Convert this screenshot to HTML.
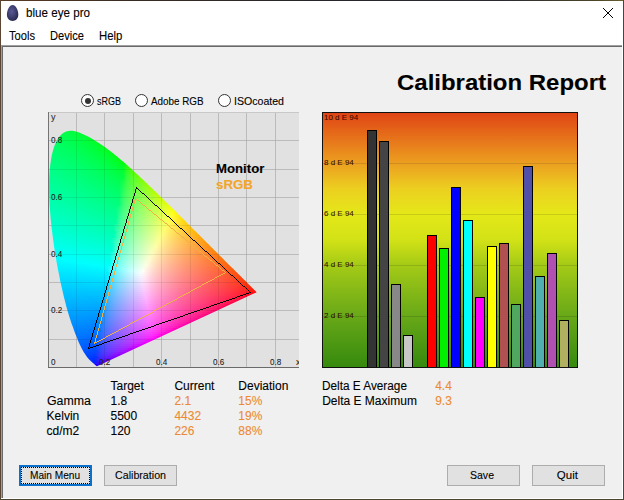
<!DOCTYPE html>
<html><head><meta charset="utf-8"><style>
html,body{margin:0;padding:0}
body{width:624px;height:500px;overflow:hidden;position:relative;background:#f0f0f0;font-family:"Liberation Sans", sans-serif}
div{position:absolute;box-sizing:border-box}
.t{white-space:nowrap;transform-origin:0 0;-webkit-text-stroke:0.1px currentColor}
.ciefill{left:48px;top:112px;width:251px;height:256px}
.ciefill div{height:2px}
.gl{background:rgba(0,0,0,0.2)}
.bar{width:10px;border:1px solid #000}
.btn{top:465px;height:21px;width:73px;background:#e1e1e1;border:1px solid #adadad}
.radio{top:94px;width:13px;height:13px;border-radius:50%;border:1px solid #333;background:#fff}
.lb{font-size:9px;line-height:9px;color:#222;transform:scaleX(0.9)}
.dl{font-size:8px;color:rgba(40,0,0,0.9);white-space:nowrap;left:1px}
</style></head><body>
<!-- window frame -->
<div style="left:0;top:0;width:624px;height:46px;background:#fff"></div>
<div style="left:0;top:0;width:624px;height:1px;background:linear-gradient(90deg,#5a3c24 0%,#3a2c22 20%,#26262a 50%,#2a2a30 80%,#4a4428 95%,#6a6030 100%)"></div>
<div style="left:0;top:0;width:1px;height:500px;background:#5b4634"></div>
<div style="left:623px;top:0;width:1px;height:500px;background:#4a4630"></div>
<div style="left:0;top:499px;width:624px;height:1px;background:#4a4630"></div>
<!-- client sunken border -->
<div style="left:1px;top:45px;width:622px;height:1px;background:#a0a0a0"></div>
<div style="left:1px;top:46px;width:621px;height:1px;background:#696969"></div>
<div style="left:1px;top:45px;width:1px;height:454px;background:#a0a0a0"></div>
<div style="left:2px;top:46px;width:1px;height:452px;background:#696969"></div>
<div style="left:622px;top:45px;width:1px;height:454px;background:#fff"></div>
<div style="left:1px;top:498px;width:622px;height:1px;background:#fff"></div>
<!-- egg icon -->
<svg style="position:absolute;left:0;top:0" width="30" height="30" viewBox="0 0 30 30">
<defs><radialGradient id="eg" cx="0.42" cy="0.4" r="0.65"><stop offset="0" stop-color="#5a5a94"/><stop offset="0.6" stop-color="#3c3c6e"/><stop offset="1" stop-color="#262648"/></radialGradient></defs>
<path d="M12.6 5.1C9.6 5.1 6.9 10.2 6.9 14.6C6.9 18.6 9.4 21 12.6 21C15.8 21 18.3 18.6 18.3 14.6C18.3 10.2 15.6 5.1 12.6 5.1Z" fill="url(#eg)"/>
</svg>
<!-- close X -->
<svg style="position:absolute;left:602px;top:7px" width="12" height="12" viewBox="0 0 12 12"><path d="M1 1L11 11M11 1L1 11" stroke="#000" stroke-width="1"/></svg>
<!-- radios -->
<div class="radio" style="left:81px"></div><div style="left:84.5px;top:97.5px;width:6px;height:6px;border-radius:50%;background:#333"></div>
<div class="radio" style="left:135px"></div>
<div class="radio" style="left:218px"></div>
<!-- CIE plot -->
<div style="left:48px;top:112px;width:251px;height:256px;background:#e1e1e1;border-top:1px solid #c8c8c8"></div>
<div style="left:48px;top:112px;width:251px;height:256px"><div style="background:#cbcbcb;left:28px;top:1px;width:1px;height:255px"></div><div style="background:#cbcbcb;left:56px;top:1px;width:1px;height:255px"></div><div style="background:#cbcbcb;left:85px;top:1px;width:1px;height:255px"></div><div style="background:#cbcbcb;left:113px;top:1px;width:1px;height:255px"></div><div style="background:#cbcbcb;left:142px;top:1px;width:1px;height:255px"></div><div style="background:#cbcbcb;left:170px;top:1px;width:1px;height:255px"></div><div style="background:#cbcbcb;left:198px;top:1px;width:1px;height:255px"></div><div style="background:#cbcbcb;left:227px;top:1px;width:1px;height:255px"></div><div style="background:#cbcbcb;left:1px;top:227px;width:250px;height:1px"></div><div style="background:#cbcbcb;left:1px;top:198px;width:250px;height:1px"></div><div style="background:#cbcbcb;left:1px;top:170px;width:250px;height:1px"></div><div style="background:#cbcbcb;left:1px;top:142px;width:250px;height:1px"></div><div style="background:#cbcbcb;left:1px;top:113px;width:250px;height:1px"></div><div style="background:#cbcbcb;left:1px;top:85px;width:250px;height:1px"></div><div style="background:#cbcbcb;left:1px;top:57px;width:250px;height:1px"></div><div style="background:#cbcbcb;left:1px;top:28px;width:250px;height:1px"></div></div>
<div class="ciefill" style="clip-path:polygon(49.0px 254.2px,49.0px 254.2px,49.0px 254.2px,48.9px 254.2px,48.9px 254.2px,48.9px 254.2px,48.9px 254.2px,48.8px 254.2px,48.8px 254.2px,48.7px 254.2px,48.7px 254.2px,48.6px 254.1px,48.6px 254.1px,48.5px 254.1px,48.5px 254.0px,48.4px 254.0px,48.3px 253.9px,48.3px 253.9px,48.2px 253.8px,48.1px 253.8px,48.0px 253.7px,47.9px 253.6px,47.8px 253.5px,47.7px 253.4px,47.6px 253.3px,47.5px 253.2px,47.4px 253.1px,47.2px 253.0px,47.1px 252.9px,47.0px 252.8px,46.8px 252.6px,46.7px 252.5px,46.5px 252.4px,46.3px 252.2px,46.2px 252.0px,46.0px 251.9px,45.8px 251.7px,45.6px 251.5px,45.3px 251.3px,45.1px 251.1px,44.8px 250.9px,44.5px 250.6px,44.3px 250.4px,44.0px 250.1px,43.7px 249.9px,43.4px 249.6px,43.0px 249.3px,42.7px 249.0px,42.3px 248.6px,41.9px 248.2px,41.5px 247.8px,41.1px 247.4px,40.7px 247.0px,40.3px 246.5px,39.8px 246.0px,39.4px 245.4px,38.9px 244.8px,38.3px 244.0px,37.8px 243.2px,37.2px 242.3px,36.5px 241.3px,35.8px 240.2px,35.1px 239.0px,34.4px 237.7px,33.6px 236.2px,32.8px 234.6px,32.0px 232.9px,31.1px 231.0px,30.2px 228.9px,29.3px 226.6px,28.3px 224.1px,27.2px 221.4px,26.1px 218.4px,25.0px 215.3px,23.7px 211.9px,22.5px 208.2px,21.2px 204.3px,19.9px 200.0px,18.6px 195.5px,17.4px 190.7px,16.1px 185.7px,14.8px 180.3px,13.5px 174.6px,12.2px 168.7px,11.0px 162.5px,9.7px 156.1px,8.5px 149.5px,7.4px 142.8px,6.3px 135.9px,5.3px 129.0px,4.4px 122.0px,3.5px 115.0px,2.8px 108.1px,2.2px 101.3px,1.7px 94.6px,1.4px 88.0px,1.1px 81.6px,1.1px 75.4px,1.1px 69.3px,1.3px 63.5px,1.7px 57.9px,2.3px 52.6px,3.0px 47.7px,3.8px 43.0px,4.9px 38.7px,6.1px 34.8px,7.5px 31.3px,9.0px 28.2px,10.6px 25.6px,12.4px 23.4px,14.2px 21.7px,16.1px 20.4px,18.2px 19.5px,20.2px 18.9px,22.4px 18.7px,24.5px 18.8px,26.7px 19.2px,28.9px 19.7px,31.2px 20.5px,33.4px 21.4px,35.7px 22.4px,37.9px 23.4px,40.1px 24.6px,42.3px 25.8px,44.5px 27.1px,46.7px 28.4px,48.8px 29.7px,50.9px 31.0px,53.0px 32.4px,55.0px 33.8px,57.1px 35.2px,59.1px 36.7px,61.1px 38.2px,63.1px 39.8px,65.1px 41.3px,67.1px 42.9px,69.1px 44.5px,71.1px 46.2px,73.1px 47.9px,75.1px 49.6px,77.1px 51.3px,79.1px 53.0px,81.0px 54.8px,83.0px 56.6px,85.0px 58.4px,86.9px 60.2px,88.9px 62.0px,90.9px 63.8px,92.8px 65.7px,94.8px 67.5px,96.8px 69.4px,98.8px 71.3px,100.7px 73.2px,102.7px 75.1px,104.7px 77.0px,106.6px 78.9px,108.6px 80.8px,110.6px 82.7px,112.5px 84.7px,114.5px 86.6px,116.4px 88.5px,118.4px 90.4px,120.4px 92.4px,122.3px 94.3px,124.3px 96.2px,126.2px 98.1px,128.1px 100.0px,130.0px 102.0px,132.0px 103.9px,133.9px 105.8px,135.8px 107.6px,137.6px 109.5px,139.5px 111.4px,141.4px 113.2px,143.2px 115.1px,145.0px 116.9px,146.9px 118.7px,148.7px 120.5px,150.5px 122.3px,152.2px 124.1px,154.0px 125.8px,155.7px 127.5px,157.4px 129.2px,159.1px 130.9px,160.8px 132.6px,162.4px 134.2px,164.0px 135.8px,165.6px 137.4px,167.2px 138.9px,168.7px 140.4px,170.2px 141.9px,171.6px 143.4px,173.0px 144.8px,174.3px 146.1px,175.7px 147.4px,176.9px 148.7px,178.2px 149.9px,179.4px 151.2px,180.6px 152.4px,181.8px 153.5px,182.9px 154.7px,184.0px 155.7px,185.1px 156.8px,186.1px 157.8px,187.1px 158.8px,188.0px 159.7px,188.9px 160.6px,189.8px 161.4px,190.6px 162.3px,191.4px 163.0px,192.2px 163.8px,192.9px 164.5px,193.6px 165.2px,194.3px 165.9px,194.9px 166.6px,195.5px 167.2px,196.1px 167.8px,196.7px 168.3px,197.2px 168.8px,197.7px 169.3px,198.2px 169.8px,198.7px 170.3px,199.1px 170.7px,199.5px 171.2px,200.0px 171.6px,200.4px 172.0px,200.7px 172.4px,201.1px 172.7px,201.5px 173.1px,201.8px 173.4px,202.1px 173.8px,202.5px 174.1px,202.8px 174.4px,203.1px 174.7px,203.4px 175.0px,203.6px 175.3px,203.9px 175.5px,204.2px 175.8px,204.4px 176.0px,204.6px 176.3px,204.9px 176.5px,205.1px 176.7px,205.3px 176.9px,205.5px 177.1px,205.6px 177.2px,205.8px 177.4px,206.0px 177.6px,206.1px 177.7px,206.3px 177.9px,206.4px 178.0px,206.5px 178.1px,206.7px 178.3px,206.8px 178.4px,206.9px 178.5px,207.0px 178.6px,207.1px 178.7px,207.2px 178.8px,207.3px 178.9px,207.3px 178.9px,207.4px 179.0px,207.5px 179.1px,207.5px 179.1px,207.6px 179.2px,207.6px 179.2px,207.7px 179.3px,207.7px 179.3px,207.8px 179.4px,207.8px 179.4px,207.9px 179.5px,207.9px 179.5px,208.0px 179.6px,208.0px 179.6px,208.0px 179.6px,208.1px 179.7px,208.1px 179.7px,208.2px 179.8px,208.2px 179.8px,208.2px 179.8px,208.3px 179.9px,208.3px 179.9px,208.3px 179.9px,208.4px 180.0px,208.4px 180.0px,208.4px 180.0px,208.5px 180.1px,208.5px 180.1px,208.5px 180.1px,208.5px 180.1px,208.6px 180.2px,208.6px 180.2px,208.6px 180.2px,208.6px 180.2px,208.6px 180.2px,208.6px 180.2px,208.6px 180.2px,208.6px 180.2px,208.6px 180.2px,208.6px 180.2px,208.6px 180.2px,208.7px 180.3px)"><div style="left:16px;top:18px;width:15px;background:linear-gradient(90deg,#00ff49 0px,#00ff44 4px,#00ff3e 8px,#00ff38 12px,#00ff30 16px)"></div><div style="left:12px;top:20px;width:24px;background:linear-gradient(90deg,#00ff51 0px,#00ff4c 4px,#00ff47 8px,#00ff42 12px,#00ff3c 16px,#00ff35 20px,#00ff2c 24px)"></div><div style="left:10px;top:22px;width:30px;background:linear-gradient(90deg,#00ff56 0px,#00ff52 4px,#00ff4d 8px,#00ff48 12px,#00ff42 16px,#00ff3c 20px,#00ff35 24px,#00ff2d 28px,#00ff23 32px)"></div><div style="left:8px;top:24px;width:37px;background:linear-gradient(90deg,#00ff5b 0px,#00ff57 4px,#00ff52 8px,#00ff4d 12px,#00ff48 16px,#00ff43 20px,#00ff3c 24px,#00ff35 28px,#00ff2d 32px,#00ff23 36px,#00ff14 40px)"></div><div style="left:7px;top:26px;width:40px;background:linear-gradient(90deg,#00ff5e 0px,#00ff5a 4px,#00ff56 8px,#00ff52 12px,#00ff4d 16px,#00ff47 20px,#00ff42 24px,#00ff3b 28px,#00ff34 32px,#00ff2b 36px,#00ff20 40px)"></div><div style="left:6px;top:28px;width:45px;background:linear-gradient(90deg,#00ff62 0px,#00ff5e 4px,#00ff5a 8px,#00ff56 12px,#00ff51 16px,#00ff4c 20px,#00ff47 24px,#00ff41 28px,#00ff3a 32px,#00ff32 36px,#00ff29 40px,#00ff1d 44px,#00ff00 48px)"></div><div style="left:5px;top:30px;width:48px;background:linear-gradient(90deg,#00ff65 0px,#00ff61 4px,#00ff5e 8px,#00ff59 12px,#00ff55 16px,#00ff50 20px,#00ff4b 24px,#00ff46 28px,#00ff3f 32px,#00ff39 36px,#00ff31 40px,#00ff27 44px,#00ff19 48px)"></div><div style="left:4px;top:32px;width:54px;background:linear-gradient(90deg,#00ff68 0px,#00ff65 4px,#00ff61 8px,#00ff5d 12px,#00ff59 16px,#00ff54 20px,#00ff50 24px,#00ff4a 28px,#00ff45 32px,#00ff3e 36px,#00ff37 40px,#00ff2f 44px,#00ff24 48px,#00ff15 52px,#00ff00 56px)"></div><div style="left:4px;top:34px;width:56px;background:linear-gradient(90deg,#00ff6b 0px,#00ff67 4px,#00ff64 8px,#00ff60 12px,#00ff5c 16px,#00ff57 20px,#00ff53 24px,#00ff4e 28px,#00ff48 32px,#00ff42 36px,#00ff3b 40px,#00ff34 44px,#00ff2a 48px,#00ff1e 52px,#00ff03 56px)"></div><div style="left:3px;top:36px;width:60px;background:linear-gradient(90deg,#00ff6e 0px,#00ff6b 4px,#00ff67 8px,#00ff63 12px,#00ff5f 16px,#00ff5b 20px,#00ff57 24px,#00ff52 28px,#00ff4d 32px,#00ff47 36px,#00ff41 40px,#00ff3a 44px,#00ff32 48px,#00ff28 52px,#00ff1a 56px,#00ff00 60px)"></div><div style="left:2px;top:38px;width:64px;background:linear-gradient(90deg,#00ff71 0px,#00ff6e 4px,#00ff6b 8px,#00ff67 12px,#00ff63 16px,#00ff5f 20px,#00ff5b 24px,#00ff56 28px,#00ff51 32px,#00ff4c 36px,#00ff46 40px,#00ff40 44px,#00ff38 48px,#00ff30 52px,#00ff25 56px,#00ff16 60px,#00ff00 64px)"></div><div style="left:1px;top:40px;width:67px;background:linear-gradient(90deg,#00ff74 0px,#00ff71 4px,#00ff6e 8px,#00ff6a 12px,#00ff67 16px,#00ff63 20px,#00ff5f 24px,#00ff5a 28px,#00ff56 32px,#00ff51 36px,#00ff4b 40px,#00ff45 44px,#00ff3f 48px,#00ff37 52px,#00ff2e 56px,#00ff23 60px,#00ff10 64px,#00ff00 68px)"></div><div style="left:1px;top:42px;width:70px;background:linear-gradient(90deg,#00ff77 0px,#00ff74 4px,#00ff70 8px,#00ff6d 12px,#00ff69 16px,#00ff65 20px,#00ff61 24px,#00ff5d 28px,#00ff59 32px,#00ff54 36px,#00ff4f 40px,#00ff49 44px,#00ff42 48px,#00ff3b 52px,#00ff33 56px,#00ff29 60px,#00ff1b 64px,#00ff00 68px,#00ff00 72px)"></div><div style="left:1px;top:44px;width:72px;background:linear-gradient(90deg,#00ff79 0px,#00ff76 4px,#00ff73 8px,#00ff6f 12px,#00ff6c 16px,#00ff68 20px,#00ff64 24px,#00ff60 28px,#00ff5c 32px,#00ff57 36px,#00ff52 40px,#00ff4c 44px,#00ff46 48px,#00ff40 52px,#00ff38 56px,#00ff2f 60px,#00ff23 64px,#00ff11 68px,#00ff00 72px)"></div><div style="left:0px;top:46px;width:76px;background:linear-gradient(90deg,#00ff7c 0px,#00ff79 4px,#00ff76 8px,#00ff73 12px,#00ff6f 16px,#00ff6c 20px,#00ff68 24px,#00ff64 28px,#00ff60 32px,#00ff5b 36px,#00ff56 40px,#00ff51 44px,#00ff4b 48px,#00ff45 52px,#00ff3e 56px,#00ff36 60px,#00ff2d 64px,#00ff20 68px,#00ff08 72px,#00ff00 76px)"></div><div style="left:0px;top:48px;width:78px;background:linear-gradient(90deg,#00ff7e 0px,#00ff7b 4px,#00ff78 8px,#00ff75 12px,#00ff72 16px,#00ff6e 20px,#00ff6b 24px,#00ff67 28px,#00ff63 32px,#00ff5e 36px,#00ff59 40px,#00ff54 44px,#00ff4f 48px,#00ff49 52px,#00ff42 56px,#00ff3b 60px,#00ff32 64px,#00ff27 68px,#00ff18 72px,#00ff00 76px,#29ff00 80px)"></div><div style="left:0px;top:50px;width:80px;background:linear-gradient(90deg,#00ff81 0px,#00ff7e 4px,#00ff7b 8px,#00ff78 12px,#00ff74 16px,#00ff71 20px,#00ff6d 24px,#00ff69 28px,#00ff65 32px,#00ff61 36px,#00ff5d 40px,#00ff58 44px,#00ff52 48px,#00ff4d 52px,#00ff46 56px,#00ff3f 60px,#00ff37 64px,#00ff2e 68px,#00ff21 72px,#00ff09 76px,#2bff00 80px)"></div><div style="left:0px;top:52px;width:82px;background:linear-gradient(90deg,#00ff83 0px,#00ff80 4px,#00ff7d 8px,#00ff7a 12px,#00ff77 16px,#00ff73 20px,#00ff70 24px,#00ff6c 28px,#00ff68 32px,#00ff64 36px,#00ff60 40px,#00ff5b 44px,#00ff56 48px,#00ff50 52px,#00ff4a 56px,#00ff44 60px,#00ff3c 64px,#00ff33 68px,#00ff28 72px,#00ff19 76px,#2eff00 80px,#48ff00 84px)"></div><div style="left:-1px;top:54px;width:86px;background:linear-gradient(90deg,#00ff86 0px,#00ff83 4px,#00ff80 8px,#00ff7d 12px,#00ff7a 16px,#00ff77 20px,#00ff73 24px,#00ff70 28px,#00ff6c 32px,#00ff68 36px,#00ff64 40px,#00ff5f 44px,#00ff5a 48px,#00ff55 52px,#00ff4f 56px,#00ff49 60px,#00ff42 64px,#00ff3a 68px,#00ff31 72px,#00ff25 76px,#28ff13 80px,#44ff00 84px,#58ff00 88px)"></div><div style="left:-1px;top:56px;width:87px;background:linear-gradient(90deg,#00ff88 0px,#00ff86 4px,#00ff83 8px,#00ff80 12px,#00ff7d 16px,#00ff79 20px,#00ff76 24px,#00ff72 28px,#00ff6f 32px,#00ff6b 36px,#00ff67 40px,#00ff62 44px,#00ff5e 48px,#00ff58 52px,#00ff53 56px,#00ff4d 60px,#00ff46 64px,#00ff3f 68px,#00ff37 72px,#00ff2c 76px,#2bff1e 80px,#46ff00 84px,#5aff00 88px)"></div><div style="left:-1px;top:58px;width:89px;background:linear-gradient(90deg,#00ff8b 0px,#00ff88 4px,#00ff85 8px,#00ff82 12px,#00ff7f 16px,#00ff7c 20px,#00ff79 24px,#00ff75 28px,#00ff71 32px,#00ff6e 36px,#00ff6a 40px,#00ff65 44px,#00ff61 48px,#00ff5c 52px,#00ff57 56px,#00ff51 60px,#00ff4b 64px,#00ff44 68px,#00ff3c 72px,#00ff32 76px,#2eff26 80px,#48ff14 84px,#5cff00 88px,#6cff00 92px)"></div><div style="left:-1px;top:60px;width:92px;background:linear-gradient(90deg,#00ff8d 0px,#00ff8a 4px,#00ff87 8px,#00ff85 12px,#00ff82 16px,#00ff7e 20px,#00ff7b 24px,#00ff78 28px,#00ff74 32px,#00ff70 36px,#00ff6c 40px,#00ff68 44px,#00ff64 48px,#00ff5f 52px,#00ff5a 56px,#00ff54 60px,#00ff4e 64px,#00ff48 68px,#00ff40 72px,#00ff38 76px,#31ff2d 80px,#4aff1f 84px,#5dff00 88px,#6eff00 92px)"></div><div style="left:-1px;top:62px;width:94px;background:linear-gradient(90deg,#00ff8f 0px,#00ff8d 4px,#00ff8a 8px,#00ff87 12px,#00ff84 16px,#00ff81 20px,#00ff7e 24px,#00ff7a 28px,#00ff77 32px,#00ff73 36px,#00ff6f 40px,#00ff6b 44px,#00ff67 48px,#00ff62 52px,#00ff5d 56px,#00ff58 60px,#00ff52 64px,#00ff4c 68px,#00ff45 72px,#00ff3d 76px,#33ff33 80px,#4cff27 84px,#5fff15 88px,#6fff00 92px,#7eff00 96px)"></div><div style="left:-1px;top:64px;width:96px;background:linear-gradient(90deg,#00ff92 0px,#00ff8f 4px,#00ff8c 8px,#00ff89 12px,#00ff87 16px,#00ff84 20px,#00ff80 24px,#00ff7d 28px,#00ff7a 32px,#00ff76 36px,#00ff72 40px,#00ff6e 44px,#00ff6a 48px,#00ff65 52px,#00ff61 56px,#00ff5b 60px,#00ff56 64px,#00ff50 68px,#00ff49 72px,#00ff41 76px,#36ff39 80px,#4eff2e 84px,#61ff20 88px,#71ff00 92px,#7fff00 96px)"></div><div style="left:-1px;top:66px;width:98px;background:linear-gradient(90deg,#00ff94 0px,#00ff91 4px,#00ff8f 8px,#00ff8c 12px,#00ff89 16px,#00ff86 20px,#00ff83 24px,#00ff80 28px,#00ff7c 32px,#00ff79 36px,#00ff75 40px,#00ff71 44px,#00ff6d 48px,#00ff69 52px,#00ff64 56px,#00ff5f 60px,#00ff5a 64px,#00ff54 68px,#00ff4d 72px,#06ff46 76px,#38ff3e 80px,#50ff34 84px,#63ff28 88px,#73ff16 92px,#81ff00 96px,#8eff00 100px)"></div><div style="left:-1px;top:68px;width:100px;background:linear-gradient(90deg,#00ff96 0px,#00ff94 4px,#00ff91 8px,#00ff8e 12px,#00ff8c 16px,#00ff89 20px,#00ff86 24px,#00ff82 28px,#00ff7f 32px,#00ff7c 36px,#00ff78 40px,#00ff74 44px,#00ff70 48px,#00ff6c 52px,#00ff67 56px,#00ff62 60px,#00ff5d 64px,#00ff57 68px,#00ff51 72px,#10ff4a 76px,#3bff43 80px,#52ff3a 84px,#65ff2f 88px,#75ff21 92px,#83ff00 96px,#90ff00 100px)"></div><div style="left:-1px;top:70px;width:102px;background:linear-gradient(90deg,#00ff99 0px,#00ff96 4px,#00ff93 8px,#00ff91 12px,#00ff8e 16px,#00ff8b 20px,#00ff88 24px,#00ff85 28px,#00ff82 32px,#00ff7e 36px,#00ff7b 40px,#00ff77 44px,#00ff73 48px,#00ff6f 52px,#00ff6a 56px,#00ff66 60px,#00ff61 64px,#00ff5b 68px,#00ff55 72px,#17ff4f 76px,#3dff47 80px,#54ff3f 84px,#67ff35 88px,#76ff29 92px,#85ff17 96px,#92ff00 100px,#9eff00 104px)"></div><div style="left:-1px;top:72px;width:104px;background:linear-gradient(90deg,#00ff9b 0px,#00ff98 4px,#00ff96 8px,#00ff93 12px,#00ff91 16px,#00ff8e 20px,#00ff8b 24px,#00ff88 28px,#00ff84 32px,#00ff81 36px,#00ff7e 40px,#00ff7a 44px,#00ff76 48px,#00ff72 52px,#00ff6e 56px,#00ff69 60px,#00ff64 64px,#00ff5f 68px,#00ff59 72px,#1cff53 76px,#40ff4c 80px,#56ff44 84px,#68ff3b 88px,#78ff30 92px,#86ff22 96px,#94ff00 100px,#a0ff00 104px)"></div><div style="left:-1px;top:74px;width:106px;background:linear-gradient(90deg,#00ff9d 0px,#00ff9b 4px,#00ff98 8px,#00ff96 12px,#00ff93 16px,#00ff90 20px,#00ff8d 24px,#00ff8a 28px,#00ff87 32px,#00ff84 36px,#00ff80 40px,#00ff7d 44px,#00ff79 48px,#00ff75 52px,#00ff71 56px,#00ff6c 60px,#00ff67 64px,#00ff62 68px,#00ff5d 72px,#20ff57 76px,#42ff50 80px,#58ff49 84px,#6aff40 88px,#7aff37 92px,#88ff2a 96px,#96ff18 100px,#a2ff00 104px,#aeff00 108px)"></div><div style="left:-1px;top:76px;width:109px;background:linear-gradient(90deg,#00ffa0 0px,#00ff9d 4px,#00ff9b 8px,#00ff98 12px,#00ff96 16px,#00ff93 20px,#00ff90 24px,#00ff8d 28px,#00ff8a 32px,#00ff87 36px,#00ff83 40px,#00ff80 44px,#00ff7c 48px,#00ff78 52px,#00ff74 56px,#00ff70 60px,#00ff6b 64px,#00ff66 68px,#00ff61 72px,#24ff5b 76px,#44ff54 80px,#5aff4d 84px,#6cff46 88px,#7cff3c 92px,#8aff31 96px,#97ff23 100px,#a4ff00 104px,#b0ff00 108px,#bbff00 112px)"></div><div style="left:-1px;top:78px;width:111px;background:linear-gradient(90deg,#00ffa2 0px,#00ffa0 4px,#00ff9d 8px,#00ff9b 12px,#00ff98 16px,#00ff95 20px,#00ff93 24px,#00ff90 28px,#00ff8d 32px,#00ff89 36px,#00ff86 40px,#00ff83 44px,#00ff7f 48px,#00ff7b 52px,#00ff77 56px,#00ff73 60px,#00ff6e 64px,#00ff69 68px,#00ff64 72px,#27ff5f 76px,#47ff59 80px,#5cff52 84px,#6eff4a 88px,#7eff42 92px,#8cff38 96px,#99ff2b 100px,#a6ff19 104px,#b2ff00 108px,#bdff00 112px)"></div><div style="left:-1px;top:80px;width:113px;background:linear-gradient(90deg,#00ffa4 0px,#00ffa2 4px,#00ffa0 8px,#00ff9d 12px,#00ff9b 16px,#00ff98 20px,#00ff95 24px,#00ff92 28px,#00ff8f 32px,#00ff8c 36px,#00ff89 40px,#00ff86 44px,#00ff82 48px,#00ff7e 52px,#00ff7a 56px,#00ff76 60px,#00ff72 64px,#00ff6d 68px,#00ff68 72px,#2bff62 76px,#49ff5d 80px,#5eff56 84px,#70ff4f 88px,#80ff47 92px,#8eff3e 96px,#9bff33 100px,#a8ff24 104px,#b4ff00 108px,#bfff00 112px,#caff00 116px)"></div><div style="left:-1px;top:82px;width:115px;background:linear-gradient(90deg,#00ffa7 0px,#00ffa5 4px,#00ffa2 8px,#00ffa0 12px,#00ff9d 16px,#00ff9b 20px,#00ff98 24px,#00ff95 28px,#00ff92 32px,#00ff8f 36px,#00ff8c 40px,#00ff88 44px,#00ff85 48px,#00ff81 52px,#00ff7d 56px,#00ff79 60px,#00ff75 64px,#00ff70 68px,#00ff6b 72px,#2eff66 76px,#4bff61 80px,#60ff5a 84px,#72ff54 88px,#82ff4c 92px,#90ff43 96px,#9dff39 100px,#aaff2c 104px,#b6ff1a 108px,#c1ff00 112px,#ccff00 116px)"></div><div style="left:-1px;top:84px;width:117px;background:linear-gradient(90deg,#00ffa9 0px,#00ffa7 4px,#00ffa5 8px,#00ffa2 12px,#00ffa0 16px,#00ff9d 20px,#00ff9b 24px,#00ff98 28px,#00ff95 32px,#00ff92 36px,#00ff8f 40px,#00ff8b 44px,#00ff88 48px,#00ff84 52px,#00ff80 56px,#00ff7c 60px,#00ff78 64px,#00ff74 68px,#00ff6f 72px,#31ff6a 76px,#4dff64 80px,#62ff5e 84px,#74ff58 88px,#84ff51 92px,#92ff49 96px,#9fff3f 100px,#acff34 104px,#b8ff25 108px,#c3ff03 112px,#cfff00 116px,#daff00 120px)"></div><div style="left:-1px;top:86px;width:119px;background:linear-gradient(90deg,#00ffac 0px,#00ffaa 4px,#00ffa7 8px,#00ffa5 12px,#00ffa2 16px,#00ffa0 20px,#00ff9d 24px,#00ff9a 28px,#00ff98 32px,#00ff95 36px,#00ff92 40px,#00ff8e 44px,#00ff8b 48px,#00ff87 52px,#00ff84 56px,#00ff80 60px,#00ff7c 64px,#00ff77 68px,#00ff73 72px,#34ff6e 76px,#50ff68 80px,#64ff63 84px,#76ff5c 88px,#86ff55 92px,#94ff4e 96px,#a1ff45 100px,#aeff3b 104px,#baff2e 108px,#c6ff1b 112px,#d1ff00 116px,#dcff00 120px)"></div><div style="left:-1px;top:88px;width:121px;background:linear-gradient(90deg,#00ffae 0px,#00ffac 4px,#00ffaa 8px,#00ffa7 12px,#00ffa5 16px,#00ffa2 20px,#00ffa0 24px,#00ff9d 28px,#00ff9a 32px,#00ff97 36px,#00ff94 40px,#00ff91 44px,#00ff8e 48px,#00ff8a 52px,#00ff87 56px,#00ff83 60px,#00ff7f 64px,#00ff7b 68px,#00ff76 72px,#37ff71 76px,#52ff6c 80px,#66ff67 84px,#78ff60 88px,#88ff5a 92px,#96ff53 96px,#a3ff4a 100px,#b0ff41 104px,#bcff35 108px,#c8ff26 112px,#d3ff06 116px,#deff00 120px,#e9ff00 124px)"></div><div style="left:-1px;top:90px;width:123px;background:linear-gradient(90deg,#00ffb1 0px,#00ffaf 4px,#00ffac 8px,#00ffaa 12px,#00ffa8 16px,#00ffa5 20px,#00ffa3 24px,#00ffa0 28px,#00ff9d 32px,#00ff9a 36px,#00ff97 40px,#00ff94 44px,#00ff91 48px,#00ff8d 52px,#00ff8a 56px,#00ff86 60px,#00ff82 64px,#00ff7e 68px,#00ff7a 72px,#3aff75 76px,#54ff70 80px,#69ff6a 84px,#7aff65 88px,#8aff5e 92px,#98ff57 96px,#a5ff4f 100px,#b2ff47 104px,#beff3c 108px,#caff2f 112px,#d6ff1c 116px,#e1ff00 120px,#ecff00 124px)"></div><div style="left:-1px;top:92px;width:125px;background:linear-gradient(90deg,#00ffb3 0px,#00ffb1 4px,#00ffaf 8px,#00ffad 12px,#00ffaa 16px,#00ffa8 20px,#00ffa5 24px,#00ffa3 28px,#00ffa0 32px,#00ff9d 36px,#00ff9a 40px,#00ff97 44px,#00ff94 48px,#00ff91 52px,#00ff8d 56px,#00ff89 60px,#00ff85 64px,#00ff81 68px,#00ff7d 72px,#3cff78 76px,#56ff74 80px,#6bff6e 84px,#7cff69 88px,#8cff63 92px,#9aff5c 96px,#a7ff54 100px,#b4ff4c 104px,#c1ff42 108px,#ccff37 112px,#d8ff27 116px,#e3ff08 120px,#eeff00 124px,#f9ff00 128px)"></div><div style="left:-1px;top:94px;width:127px;background:linear-gradient(90deg,#00ffb6 0px,#00ffb4 4px,#00ffb1 8px,#00ffaf 12px,#00ffad 16px,#00ffaa 20px,#00ffa8 24px,#00ffa5 28px,#00ffa3 32px,#00ffa0 36px,#00ff9d 40px,#00ff9a 44px,#00ff97 48px,#00ff94 52px,#00ff90 56px,#00ff8d 60px,#00ff89 64px,#00ff85 68px,#10ff81 72px,#3fff7c 76px,#59ff77 80px,#6dff72 84px,#7eff6d 88px,#8eff67 92px,#9cff60 96px,#aaff59 100px,#b7ff51 104px,#c3ff48 108px,#cfff3e 112px,#daff30 116px,#e6ff1d 120px,#f1ff00 124px,#fcff00 128px)"></div><div style="left:-1px;top:96px;width:129px;background:linear-gradient(90deg,#00ffb8 0px,#00ffb6 4px,#00ffb4 8px,#00ffb2 12px,#00ffb0 16px,#00ffad 20px,#00ffab 24px,#00ffa8 28px,#00ffa6 32px,#00ffa3 36px,#00ffa0 40px,#00ff9d 44px,#00ff9a 48px,#00ff97 52px,#00ff93 56px,#00ff90 60px,#00ff8c 64px,#00ff88 68px,#17ff84 72px,#42ff80 76px,#5bff7b 80px,#6fff76 84px,#80ff71 88px,#90ff6b 92px,#9eff65 96px,#acff5e 100px,#b9ff57 104px,#c5ff4e 108px,#d1ff44 112px,#ddff38 116px,#e8ff29 120px,#f3ff0a 124px,#feff00 128px,#fff400 132px)"></div><div style="left:0px;top:98px;width:130px;background:linear-gradient(90deg,#00ffba 0px,#00ffb8 4px,#00ffb6 8px,#00ffb4 12px,#00ffb2 16px,#00ffaf 20px,#00ffad 24px,#00ffaa 28px,#00ffa8 32px,#00ffa5 36px,#00ffa2 40px,#00ff9f 44px,#00ff9c 48px,#00ff99 52px,#00ff96 56px,#00ff92 60px,#00ff8f 64px,#00ff8b 68px,#2aff87 72px,#4bff82 76px,#62ff7e 80px,#76ff79 84px,#86ff73 88px,#96ff6e 92px,#a4ff68 96px,#b1ff61 100px,#beff5a 104px,#cbff51 108px,#d7ff48 112px,#e2ff3c 116px,#eeff2e 120px,#f9ff17 124px,#fff900 128px,#ffef00 132px)"></div><div style="left:0px;top:100px;width:133px;background:linear-gradient(90deg,#00ffbd 0px,#00ffbb 4px,#00ffb9 8px,#00ffb7 12px,#00ffb4 16px,#00ffb2 20px,#00ffb0 24px,#00ffad 28px,#00ffab 32px,#00ffa8 36px,#00ffa5 40px,#00ffa2 44px,#00ff9f 48px,#00ff9c 52px,#00ff99 56px,#00ff95 60px,#00ff92 64px,#00ff8e 68px,#2eff8a 72px,#4eff86 76px,#65ff81 80px,#78ff7d 84px,#88ff77 88px,#98ff72 92px,#a6ff6c 96px,#b4ff66 100px,#c1ff5f 104px,#cdff57 108px,#d9ff4e 112px,#e5ff43 116px,#f0ff36 120px,#fcff25 124px,#fff600 128px,#ffec00 132px,#ffe300 136px)"></div><div style="left:0px;top:102px;width:134px;background:linear-gradient(90deg,#00ffc0 0px,#00ffbe 4px,#00ffbc 8px,#00ffb9 12px,#00ffb7 16px,#00ffb5 20px,#00ffb3 24px,#00ffb0 28px,#00ffae 32px,#00ffab 36px,#00ffa8 40px,#00ffa5 44px,#00ffa2 48px,#00ff9f 52px,#00ff9c 56px,#00ff99 60px,#00ff95 64px,#00ff92 68px,#31ff8e 72px,#50ff89 76px,#67ff85 80px,#7aff80 84px,#8bff7b 88px,#9aff76 92px,#a8ff70 96px,#b6ff6a 100px,#c3ff63 104px,#d0ff5c 108px,#dcff53 112px,#e8ff4a 116px,#f3ff3e 120px,#fffe2f 124px,#fff417 128px,#ffea00 132px,#ffe100 136px)"></div><div style="left:0px;top:104px;width:136px;background:linear-gradient(90deg,#00ffc2 0px,#00ffc0 4px,#00ffbe 8px,#00ffbc 12px,#00ffba 16px,#00ffb8 20px,#00ffb5 24px,#00ffb3 28px,#00ffb1 32px,#00ffae 36px,#00ffab 40px,#00ffa9 44px,#00ffa6 48px,#00ffa3 52px,#00ff9f 56px,#00ff9c 60px,#00ff99 64px,#00ff95 68px,#35ff91 72px,#53ff8d 76px,#69ff89 80px,#7cff84 84px,#8dff7f 88px,#9cff7a 92px,#abff75 96px,#b8ff6f 100px,#c5ff68 104px,#d2ff61 108px,#deff59 112px,#eaff50 116px,#f6ff45 120px,#fffb37 124px,#fff124 128px,#ffe700 132px,#ffde00 136px)"></div><div style="left:0px;top:106px;width:138px;background:linear-gradient(90deg,#00ffc5 0px,#00ffc3 4px,#00ffc1 8px,#00ffbf 12px,#00ffbd 16px,#00ffbb 20px,#00ffb8 24px,#00ffb6 28px,#00ffb4 32px,#00ffb1 36px,#00ffae 40px,#00ffac 44px,#00ffa9 48px,#00ffa6 52px,#00ffa3 56px,#00ff9f 60px,#00ff9c 64px,#00ff98 68px,#38ff95 72px,#55ff91 76px,#6bff8d 80px,#7eff88 84px,#8fff83 88px,#9fff7e 92px,#adff79 96px,#bbff73 100px,#c8ff6d 104px,#d5ff66 108px,#e1ff5e 112px,#edff56 116px,#f9ff4c 120px,#fff83e 124px,#ffee2e 128px,#ffe417 132px,#ffdc00 136px,#ffd300 140px)"></div><div style="left:0px;top:108px;width:140px;background:linear-gradient(90deg,#00ffc8 0px,#00ffc6 4px,#00ffc4 8px,#00ffc2 12px,#00ffc0 16px,#00ffbd 20px,#00ffbb 24px,#00ffb9 28px,#00ffb7 32px,#00ffb4 36px,#00ffb1 40px,#00ffaf 44px,#00ffac 48px,#00ffa9 52px,#00ffa6 56px,#00ffa3 60px,#00ffa0 64px,#00ff9c 68px,#3bff98 72px,#58ff94 76px,#6eff90 80px,#81ff8c 84px,#91ff87 88px,#a1ff83 92px,#afff7d 96px,#bdff78 100px,#cbff72 104px,#d7ff6b 108px,#e4ff64 112px,#f0ff5b 116px,#fcff52 120px,#fff645 124px,#ffeb35 128px,#ffe223 132px,#ffd900 136px,#ffd100 140px)"></div><div style="left:0px;top:110px;width:142px;background:linear-gradient(90deg,#00ffca 0px,#00ffc8 4px,#00ffc7 8px,#00ffc5 12px,#00ffc3 16px,#00ffc0 20px,#00ffbe 24px,#00ffbc 28px,#00ffba 32px,#00ffb7 36px,#00ffb5 40px,#00ffb2 44px,#00ffaf 48px,#00ffac 52px,#00ffa9 56px,#00ffa6 60px,#00ffa3 64px,#00ffa0 68px,#3eff9c 72px,#5aff98 76px,#70ff94 80px,#83ff90 84px,#94ff8b 88px,#a3ff87 92px,#b2ff82 96px,#c0ff7c 100px,#cdff76 104px,#daff70 108px,#e7ff69 112px,#f3ff61 116px,#fffe58 120px,#fff34a 124px,#ffe83c 128px,#ffdf2c 132px,#ffd616 136px,#ffce00 140px,#ffc700 144px)"></div><div style="left:1px;top:112px;width:143px;background:linear-gradient(90deg,#00ffcd 0px,#00ffcb 4px,#00ffc9 8px,#00ffc7 12px,#00ffc5 16px,#00ffc3 20px,#00ffc1 24px,#00ffbe 28px,#00ffbc 32px,#00ffba 36px,#00ffb7 40px,#00ffb5 44px,#00ffb2 48px,#00ffaf 52px,#00ffac 56px,#00ffa9 60px,#00ffa6 64px,#20ffa2 68px,#49ff9f 72px,#63ff9b 76px,#77ff97 80px,#8aff93 84px,#9aff8e 88px,#a9ff8a 92px,#b8ff85 96px,#c6ff7f 100px,#d3ff79 104px,#e0ff73 108px,#edff6c 112px,#f9ff64 116px,#fff859 120px,#ffed4c 124px,#ffe33f 128px,#ffda30 132px,#ffd21d 136px,#ffca00 140px,#ffc300 144px)"></div><div style="left:1px;top:114px;width:145px;background:linear-gradient(90deg,#00ffcf 0px,#00ffce 4px,#00ffcc 8px,#00ffca 12px,#00ffc8 16px,#00ffc6 20px,#00ffc4 24px,#00ffc1 28px,#00ffbf 32px,#00ffbd 36px,#00ffba 40px,#00ffb8 44px,#00ffb5 48px,#00ffb2 52px,#00ffaf 56px,#00ffac 60px,#00ffa9 64px,#25ffa6 68px,#4cffa2 72px,#65ff9f 76px,#7aff9b 80px,#8cff97 84px,#9cff92 88px,#acff8e 92px,#baff89 96px,#c8ff84 100px,#d6ff7e 104px,#e3ff78 108px,#f0ff71 112px,#fcff6a 116px,#fff55e 120px,#ffea51 124px,#ffe044 128px,#ffd737 132px,#ffcf27 136px,#ffc80e 140px,#ffc000 144px,#ffba00 148px)"></div><div style="left:1px;top:116px;width:147px;background:linear-gradient(90deg,#00ffd2 0px,#00ffd0 4px,#00ffcf 8px,#00ffcd 12px,#00ffcb 16px,#00ffc9 20px,#00ffc7 24px,#00ffc5 28px,#00ffc2 32px,#00ffc0 36px,#00ffbe 40px,#00ffbb 44px,#00ffb8 48px,#00ffb6 52px,#00ffb3 56px,#00ffb0 60px,#00ffad 64px,#29ffaa 68px,#4effa6 72px,#67ffa3 76px,#7cff9f 80px,#8eff9b 84px,#9fff96 88px,#aeff92 92px,#bdff8d 96px,#cbff88 100px,#d9ff83 104px,#e6ff7d 108px,#f3ff76 112px,#fffe6f 116px,#fff262 120px,#ffe756 124px,#ffde4a 128px,#ffd53d 132px,#ffcd2e 136px,#ffc51c 140px,#ffbe00 144px,#ffb700 148px)"></div><div style="left:2px;top:118px;width:148px;background:linear-gradient(90deg,#00ffd5 0px,#00ffd3 4px,#00ffd1 8px,#00ffcf 12px,#00ffcd 16px,#00ffcb 20px,#00ffc9 24px,#00ffc7 28px,#00ffc5 32px,#00ffc3 36px,#00ffc0 40px,#00ffbe 44px,#00ffbb 48px,#00ffb8 52px,#00ffb6 56px,#00ffb3 60px,#00ffb0 64px,#38ffac 68px,#58ffa9 72px,#6fffa5 76px,#83ffa2 80px,#95ff9e 84px,#a5ff9a 88px,#b5ff95 92px,#c3ff90 96px,#d1ff8b 100px,#dfff86 104px,#ecff80 108px,#f9ff7a 112px,#fff76f 116px,#ffec63 120px,#ffe257 124px,#ffd94b 128px,#ffd03f 132px,#ffc832 136px,#ffc121 140px,#ffba00 144px,#ffb400 148px)"></div><div style="left:2px;top:120px;width:150px;background:linear-gradient(90deg,#00ffd8 0px,#00ffd6 4px,#00ffd4 8px,#00ffd2 12px,#00ffd0 16px,#00ffce 20px,#00ffcc 24px,#00ffca 28px,#00ffc8 32px,#00ffc6 36px,#00ffc4 40px,#00ffc1 44px,#00ffbf 48px,#00ffbc 52px,#00ffb9 56px,#00ffb6 60px,#00ffb3 64px,#3cffb0 68px,#5bffad 72px,#72ffa9 76px,#86ffa6 80px,#98ffa2 84px,#a8ff9e 88px,#b7ff99 92px,#c6ff95 96px,#d4ff90 100px,#e2ff8b 104px,#efff85 108px,#fcff7f 112px,#fff473 116px,#ffe967 120px,#ffdf5b 124px,#ffd650 128px,#ffcd44 132px,#ffc538 136px,#ffbe29 140px,#ffb716 144px,#ffb100 148px,#ffab00 152px)"></div><div style="left:2px;top:122px;width:152px;background:linear-gradient(90deg,#00ffdb 0px,#00ffd9 4px,#00ffd7 8px,#00ffd5 12px,#00ffd4 16px,#00ffd2 20px,#00ffd0 24px,#00ffce 28px,#00ffcb 32px,#00ffc9 36px,#00ffc7 40px,#00ffc5 44px,#00ffc2 48px,#00ffbf 52px,#00ffbd 56px,#00ffba 60px,#00ffb7 64px,#3fffb4 68px,#5dffb1 72px,#74ffad 76px,#88ffaa 80px,#9affa6 84px,#abffa2 88px,#baff9e 92px,#c9ff99 96px,#d7ff94 100px,#e5ff8f 104px,#f2ff8a 108px,#fffd83 112px,#fff177 116px,#ffe66b 120px,#ffdc5f 124px,#ffd354 128px,#ffcb49 132px,#ffc33d 136px,#ffbc30 140px,#ffb521 144px,#ffaf00 148px,#ffa900 152px)"></div><div style="left:2px;top:124px;width:154px;background:linear-gradient(90deg,#00ffde 0px,#00ffdc 4px,#00ffda 8px,#00ffd8 12px,#00ffd7 16px,#00ffd5 20px,#00ffd3 24px,#00ffd1 28px,#00ffcf 32px,#00ffcd 36px,#00ffca 40px,#00ffc8 44px,#00ffc6 48px,#00ffc3 52px,#00ffc0 56px,#00ffbe 60px,#00ffbb 64px,#42ffb8 68px,#60ffb5 72px,#77ffb1 76px,#8bffae 80px,#9dffaa 84px,#adffa6 88px,#bdffa2 92px,#ccff9e 96px,#daff99 100px,#e8ff94 104px,#f6ff8f 108px,#fffa87 112px,#ffee7a 116px,#ffe36e 120px,#ffd963 124px,#ffd058 128px,#ffc84d 132px,#ffc042 136px,#ffb936 140px,#ffb328 144px,#ffac16 148px,#ffa600 152px,#ffa100 156px)"></div><div style="left:3px;top:126px;width:155px;background:linear-gradient(90deg,#00ffe0 0px,#00ffdf 4px,#00ffdd 8px,#00ffdb 12px,#00ffd9 16px,#00ffd8 20px,#00ffd6 24px,#00ffd4 28px,#00ffd2 32px,#00ffcf 36px,#00ffcd 40px,#00ffcb 44px,#00ffc9 48px,#00ffc6 52px,#00ffc3 56px,#00ffc1 60px,#24ffbe 64px,#4effbb 68px,#69ffb8 72px,#7fffb4 76px,#92ffb1 80px,#a4ffad 84px,#b4ffaa 88px,#c4ffa5 92px,#d2ffa1 96px,#e1ff9c 100px,#efff98 104px,#fcff92 108px,#fff487 112px,#ffe87a 116px,#ffde6f 120px,#ffd464 124px,#ffcb59 128px,#ffc34f 132px,#ffbc44 136px,#ffb538 140px,#ffae2c 144px,#ffa81b 148px,#ffa300 152px,#ff9d00 156px)"></div><div style="left:3px;top:128px;width:157px;background:linear-gradient(90deg,#00ffe3 0px,#00ffe2 4px,#00ffe0 8px,#00ffde 12px,#00ffdd 16px,#00ffdb 20px,#00ffd9 24px,#00ffd7 28px,#00ffd5 32px,#00ffd3 36px,#00ffd1 40px,#00ffcf 44px,#00ffcc 48px,#00ffca 52px,#00ffc7 56px,#00ffc5 60px,#29ffc2 64px,#51ffbf 68px,#6bffbc 72px,#81ffb9 76px,#95ffb5 80px,#a6ffb2 84px,#b7ffae 88px,#c6ffaa 92px,#d5ffa6 96px,#e4ffa1 100px,#f2ff9c 104px,#fffd96 108px,#fff08a 112px,#ffe57e 116px,#ffda72 120px,#ffd168 124px,#ffc85d 128px,#ffc153 132px,#ffb948 136px,#ffb23d 140px,#ffac32 144px,#ffa624 148px,#ffa00f 152px,#ff9b00 156px,#ff9600 160px)"></div><div style="left:3px;top:130px;width:159px;background:linear-gradient(90deg,#00ffe6 0px,#00ffe5 4px,#00ffe3 8px,#00ffe2 12px,#00ffe0 16px,#00ffde 20px,#00ffdc 24px,#00ffda 28px,#00ffd9 32px,#00ffd6 36px,#00ffd4 40px,#00ffd2 44px,#00ffd0 48px,#00ffce 52px,#00ffcb 56px,#00ffc8 60px,#2dffc6 64px,#54ffc3 68px,#6effc0 72px,#84ffbd 76px,#97ffb9 80px,#a9ffb6 84px,#baffb2 88px,#c9ffae 92px,#d9ffaa 96px,#e7ffa6 100px,#f6ffa1 104px,#fffa99 108px,#ffed8d 112px,#ffe281 116px,#ffd776 120px,#ffce6b 124px,#ffc661 128px,#ffbe57 132px,#ffb74c 136px,#ffb042 140px,#ffa937 144px,#ffa32b 148px,#ff9e1b 152px,#ff9800 156px,#ff9300 160px)"></div><div style="left:4px;top:132px;width:160px;background:linear-gradient(90deg,#00ffe9 0px,#00ffe8 4px,#00ffe6 8px,#00ffe4 12px,#00ffe3 16px,#00ffe1 20px,#00ffdf 24px,#00ffdd 28px,#00ffdc 32px,#00ffda 36px,#00ffd7 40px,#00ffd5 44px,#00ffd3 48px,#00ffd1 52px,#00ffce 56px,#00ffcc 60px,#3dffc9 64px,#5effc6 68px,#77ffc3 72px,#8cffc0 76px,#9fffbd 80px,#b0ffba 84px,#c1ffb6 88px,#d0ffb2 92px,#e0ffae 96px,#eeffaa 100px,#fdffa5 104px,#fff399 108px,#ffe78c 112px,#ffdc81 116px,#ffd276 120px,#ffc96c 124px,#ffc162 128px,#ffb958 132px,#ffb24e 136px,#ffac44 140px,#ffa539 144px,#ffa02d 148px,#ff9a1f 152px,#ff9500 156px,#ff9000 160px)"></div><div style="left:4px;top:134px;width:163px;background:linear-gradient(90deg,#00ffec 0px,#00ffeb 4px,#00ffe9 8px,#00ffe8 12px,#00ffe6 16px,#00ffe5 20px,#00ffe3 24px,#00ffe1 28px,#00ffdf 32px,#00ffdd 36px,#00ffdb 40px,#00ffd9 44px,#00ffd7 48px,#00ffd5 52px,#00ffd2 56px,#00ffd0 60px,#41ffcd 64px,#61ffca 68px,#79ffc8 72px,#8fffc5 76px,#a2ffc1 80px,#b3ffbe 84px,#c4ffbb 88px,#d4ffb7 92px,#e3ffb3 96px,#f2ffaf 100px,#fffda9 104px,#ffef9c 108px,#ffe38f 112px,#ffd984 116px,#ffcf79 120px,#ffc66f 124px,#ffbe65 128px,#ffb75b 132px,#ffb052 136px,#ffa948 140px,#ffa33e 144px,#ff9d33 148px,#ff9826 152px,#ff9216 156px,#ff8d00 160px,#ff8900 164px)"></div><div style="left:4px;top:136px;width:164px;background:linear-gradient(90deg,#00fff0 0px,#00ffee 4px,#00ffed 8px,#00ffeb 12px,#00ffea 16px,#00ffe8 20px,#00ffe6 24px,#00ffe5 28px,#00ffe3 32px,#00ffe1 36px,#00ffdf 40px,#00ffdd 44px,#00ffdb 48px,#00ffd9 52px,#00ffd6 56px,#00ffd4 60px,#44ffd1 64px,#64ffcf 68px,#7cffcc 72px,#91ffc9 76px,#a5ffc6 80px,#b6ffc3 84px,#c7ffbf 88px,#d7ffbc 92px,#e6ffb8 96px,#f5ffb4 100px,#fff9ac 104px,#ffec9e 108px,#ffe092 112px,#ffd687 116px,#ffcc7c 120px,#ffc372 124px,#ffbb68 128px,#ffb45f 132px,#ffad55 136px,#ffa64c 140px,#ffa042 144px,#ff9b38 148px,#ff952d 152px,#ff901f 156px,#ff8b03 160px,#ff8600 164px)"></div><div style="left:4px;top:138px;width:166px;background:linear-gradient(90deg,#00fff3 0px,#00fff2 4px,#00fff0 8px,#00ffef 12px,#00ffed 16px,#00ffec 20px,#00ffea 24px,#00ffe8 28px,#00ffe7 32px,#00ffe5 36px,#00ffe3 40px,#00ffe1 44px,#00ffdf 48px,#00ffdd 52px,#00ffda 56px,#00ffd8 60px,#48ffd6 64px,#67ffd3 68px,#7fffd0 72px,#94ffcd 76px,#a7ffca 80px,#b9ffc7 84px,#caffc4 88px,#daffc0 92px,#eaffbd 96px,#f9ffb9 100px,#fff5ae 104px,#ffe8a1 108px,#ffdd95 112px,#ffd289 116px,#ffc97f 120px,#ffc075 124px,#ffb86b 128px,#ffb162 132px,#ffaa58 136px,#ffa44f 140px,#ff9e46 144px,#ff983c 148px,#ff9332 152px,#ff8d26 156px,#ff8915 160px,#ff8400 164px,#ff7f00 168px)"></div><div style="left:5px;top:140px;width:168px;background:linear-gradient(90deg,#00fff6 0px,#00fff5 4px,#00fff3 8px,#00fff2 12px,#00fff0 16px,#00ffef 20px,#00ffed 24px,#00ffec 28px,#00ffea 32px,#00ffe8 36px,#00ffe6 40px,#00ffe4 44px,#00ffe2 48px,#00ffe0 52px,#00ffde 56px,#28ffdc 60px,#54ffd9 64px,#70ffd7 68px,#88ffd4 72px,#9cffd1 76px,#afffce 80px,#c1ffcb 84px,#d2ffc8 88px,#e2ffc5 92px,#f1ffc1 96px,#fffcbb 100px,#ffeead 104px,#ffe2a0 108px,#ffd794 112px,#ffcd89 116px,#ffc47f 120px,#ffbb75 124px,#ffb46c 128px,#ffac62 132px,#ffa659 136px,#ffa051 140px,#ff9a47 144px,#ff943e 148px,#ff8f34 152px,#ff8a29 156px,#ff851a 160px,#ff8000 164px,#ff7c00 168px)"></div><div style="left:5px;top:142px;width:169px;background:linear-gradient(90deg,#00fffa 0px,#00fff8 4px,#00fff7 8px,#00fff5 12px,#00fff4 16px,#00fff3 20px,#00fff1 24px,#00ffef 28px,#00ffee 32px,#00ffec 36px,#00ffea 40px,#00ffe8 44px,#00ffe6 48px,#00ffe4 52px,#00ffe2 56px,#2dffe0 60px,#57ffde 64px,#73ffdb 68px,#8bffd9 72px,#9fffd6 76px,#b2ffd3 80px,#c4ffd0 84px,#d5ffcd 88px,#e5ffca 92px,#f5ffc6 96px,#fff8be 100px,#ffebaf 104px,#ffdea3 108px,#ffd497 112px,#ffca8c 116px,#ffc182 120px,#ffb878 124px,#ffb16e 128px,#ffaa65 132px,#ffa35d 136px,#ff9d54 140px,#ff974b 144px,#ff9142 148px,#ff8c38 152px,#ff872e 156px,#ff8222 160px,#ff7e10 164px,#ff7a00 168px,#ff7500 172px)"></div><div style="left:5px;top:144px;width:171px;background:linear-gradient(90deg,#00fffd 0px,#00fffc 4px,#00fffa 8px,#00fff9 12px,#00fff8 16px,#00fff6 20px,#00fff5 24px,#00fff3 28px,#00fff2 32px,#00fff0 36px,#00ffee 40px,#00ffec 44px,#00ffeb 48px,#00ffe9 52px,#00ffe7 56px,#32ffe4 60px,#5affe2 64px,#76ffe0 68px,#8effdd 72px,#a2ffdb 76px,#b5ffd8 80px,#c7ffd5 84px,#d9ffd2 88px,#e9ffcf 92px,#f9ffcb 96px,#fff5c0 100px,#ffe7b2 104px,#ffdba5 108px,#ffd099 112px,#ffc68e 116px,#ffbe84 120px,#ffb57a 124px,#ffae71 128px,#ffa768 132px,#ffa060 136px,#ff9a57 140px,#ff944e 144px,#ff8f46 148px,#ff8a3d 152px,#ff8533 156px,#ff8028 160px,#ff7b1a 164px,#ff7700 168px,#ff7300 172px)"></div><div style="left:6px;top:146px;width:172px;background:linear-gradient(90deg,#00fdff 0px,#00feff 4px,#00fffe 8px,#00fffd 12px,#00fffb 16px,#00fffa 20px,#00fff8 24px,#00fff7 28px,#00fff5 32px,#00fff4 36px,#00fff2 40px,#00fff0 44px,#00ffee 48px,#00ffec 52px,#00ffea 56px,#42ffe8 60px,#65ffe6 64px,#7fffe4 68px,#96ffe1 72px,#aaffdf 76px,#bdffdc 80px,#cfffd9 84px,#e0ffd6 88px,#f1ffd3 92px,#fffcce 96px,#ffedbe 100px,#ffe0b1 104px,#ffd5a4 108px,#ffca99 112px,#ffc18e 116px,#ffb884 120px,#ffb17b 124px,#ffa972 128px,#ffa269 132px,#ff9c60 136px,#ff9658 140px,#ff9050 144px,#ff8b47 148px,#ff863e 152px,#ff8135 156px,#ff7c2a 160px,#ff781e 164px,#ff7307 168px,#ff6f00 172px)"></div><div style="left:6px;top:148px;width:175px;background:linear-gradient(90deg,#00f9ff 0px,#00faff 4px,#00fbff 8px,#00fdff 12px,#00feff 16px,#00fffe 20px,#00fffc 24px,#00fffb 28px,#00fff9 32px,#00fff8 36px,#00fff6 40px,#00fff5 44px,#00fff3 48px,#00fff1 52px,#00ffef 56px,#46ffed 60px,#68ffeb 64px,#83ffe9 68px,#99ffe6 72px,#aeffe4 76px,#c1ffe1 80px,#d3ffdf 84px,#e4ffdc 88px,#f5ffd9 92px,#fff8d0 96px,#ffe9c1 100px,#ffddb3 104px,#ffd1a7 108px,#ffc79b 112px,#ffbe91 116px,#ffb587 120px,#ffae7d 124px,#ffa674 128px,#ffa06c 132px,#ff9963 136px,#ff935b 140px,#ff8e53 144px,#ff884a 148px,#ff8342 152px,#ff7e39 156px,#ff7a2f 160px,#ff7524 164px,#ff7115 168px,#ff6d00 172px,#ff6900 176px)"></div><div style="left:6px;top:150px;width:176px;background:linear-gradient(90deg,#00f6ff 0px,#00f7ff 4px,#00f8ff 8px,#00f9ff 12px,#00faff 16px,#00fbff 20px,#00fdff 24px,#00feff 28px,#00fffe 32px,#00fffc 36px,#00fffb 40px,#00fff9 44px,#00fff7 48px,#00fff6 52px,#00fff4 56px,#4afff2 60px,#6bfff0 64px,#86ffee 68px,#9cffeb 72px,#b1ffe9 76px,#c4ffe7 80px,#d7ffe4 84px,#e8ffe1 88px,#f9ffde 92px,#fff4d2 96px,#ffe5c3 100px,#ffd9b5 104px,#ffcea9 108px,#ffc49d 112px,#ffbb93 116px,#ffb289 120px,#ffab80 124px,#ffa377 128px,#ff9d6e 132px,#ff9666 136px,#ff905e 140px,#ff8b56 144px,#ff864e 148px,#ff8045 152px,#ff7c3d 156px,#ff7734 160px,#ff732a 164px,#ff6e1d 168px,#ff6a08 172px,#ff6600 176px)"></div><div style="left:6px;top:152px;width:178px;background:linear-gradient(90deg,#00f2ff 0px,#00f3ff 4px,#00f4ff 8px,#00f5ff 12px,#00f6ff 16px,#00f7ff 20px,#00f9ff 24px,#00faff 28px,#00fbff 32px,#00fdff 36px,#00feff 40px,#00fffd 44px,#00fffc 48px,#00fffa 52px,#08fff8 56px,#4efff7 60px,#6ffff5 64px,#89fff3 68px,#a0fff1 72px,#b5ffee 76px,#c8ffec 80px,#daffe9 84px,#ecffe7 88px,#fdffe4 92px,#fff0d4 96px,#ffe2c5 100px,#ffd5b7 104px,#ffcaab 108px,#ffc0a0 112px,#ffb795 116px,#ffaf8b 120px,#ffa782 124px,#ffa079 128px,#ff9a71 132px,#ff9369 136px,#ff8e61 140px,#ff8859 144px,#ff8351 148px,#ff7e49 152px,#ff7941 156px,#ff7438 160px,#ff702f 164px,#ff6c24 168px,#ff6715 172px,#ff6300 176px,#ff6000 180px)"></div><div style="left:7px;top:154px;width:180px;background:linear-gradient(90deg,#00efff 0px,#00f0ff 4px,#00f1ff 8px,#00f2ff 12px,#00f3ff 16px,#00f4ff 20px,#00f5ff 24px,#00f6ff 28px,#00f7ff 32px,#00f9ff 36px,#00faff 40px,#00fbff 44px,#00fdff 48px,#00feff 52px,#2dfffd 56px,#5bfffb 60px,#79fff9 64px,#92fff7 68px,#a9fff5 72px,#bdfff3 76px,#d0fff1 80px,#e3ffee 84px,#f5ffec 88px,#fff7e2 92px,#ffe8d2 96px,#ffdbc3 100px,#ffcfb6 104px,#ffc4aa 108px,#ffbb9f 112px,#ffb295 116px,#ffaa8b 120px,#ffa382 124px,#ff9c7a 128px,#ff9571 132px,#ff8f69 136px,#ff8961 140px,#ff845a 144px,#ff7f52 148px,#ff7a4a 152px,#ff7542 156px,#ff713a 160px,#ff6c31 164px,#ff6826 168px,#ff6419 172px,#ff6000 176px,#ff5c00 180px)"></div><div style="left:7px;top:156px;width:182px;background:linear-gradient(90deg,#00ebff 0px,#00ecff 4px,#00edff 8px,#00eeff 12px,#00efff 16px,#00f0ff 20px,#00f1ff 24px,#00f2ff 28px,#00f3ff 32px,#00f4ff 36px,#00f5ff 40px,#00f7ff 44px,#00f8ff 48px,#00faff 52px,#32fbff 56px,#5efdff 60px,#7cfffe 64px,#96fffd 68px,#acfffb 72px,#c1fff9 76px,#d4fff7 80px,#e7fff4 84px,#f9fff2 88px,#fff3e4 92px,#ffe4d4 96px,#ffd7c5 100px,#ffcbb8 104px,#ffc1ac 108px,#ffb7a1 112px,#ffaf97 116px,#ffa78e 120px,#ff9f84 124px,#ff997c 128px,#ff9274 132px,#ff8c6c 136px,#ff8764 140px,#ff815c 144px,#ff7c55 148px,#ff774d 152px,#ff7245 156px,#ff6e3d 160px,#ff6935 164px,#ff652b 168px,#ff6120 172px,#ff5d10 176px,#ff5900 180px,#ff5500 184px)"></div><div style="left:7px;top:158px;width:184px;background:linear-gradient(90deg,#00e8ff 0px,#00e9ff 4px,#00eaff 8px,#00eaff 12px,#00ebff 16px,#00ecff 20px,#00edff 24px,#00eeff 28px,#00efff 32px,#00f0ff 36px,#00f1ff 40px,#00f2ff 44px,#00f4ff 48px,#00f5ff 52px,#35f6ff 56px,#5ff8ff 60px,#7df9ff 64px,#97fbff 68px,#affdff 72px,#c5fffe 76px,#d8fffc 80px,#ebfffa 84px,#fefff8 88px,#ffeee6 92px,#ffe0d6 96px,#ffd3c7 100px,#ffc8ba 104px,#ffbdae 108px,#ffb4a3 112px,#ffab99 116px,#ffa490 120px,#ff9c87 124px,#ff967e 128px,#ff8f76 132px,#ff896e 136px,#ff8466 140px,#ff7e5f 144px,#ff7957 148px,#ff7450 152px,#ff6f48 156px,#ff6b41 160px,#ff6738 164px,#ff6230 168px,#ff5e26 172px,#ff5a19 176px,#ff5600 180px,#ff5200 184px)"></div><div style="left:8px;top:160px;width:184px;background:linear-gradient(90deg,#00e5ff 0px,#00e6ff 4px,#00e6ff 8px,#00e7ff 12px,#00e8ff 16px,#00e8ff 20px,#00e9ff 24px,#00eaff 28px,#00ebff 32px,#00ecff 36px,#00edff 40px,#00eeff 44px,#00efff 48px,#00f0ff 52px,#45f2ff 56px,#69f3ff 60px,#85f4ff 64px,#9df6ff 68px,#b4f8ff 72px,#caf9ff 76px,#dffbff 80px,#f3fdff 84px,#fff6f5 88px,#ffe6e3 92px,#ffd8d4 96px,#ffccc6 100px,#ffc1b9 104px,#ffb7ad 108px,#ffaea3 112px,#ffa699 116px,#ff9f90 120px,#ff9887 124px,#ff917e 128px,#ff8b76 132px,#ff856f 136px,#ff7f67 140px,#ff7a60 144px,#ff7558 148px,#ff7051 152px,#ff6b49 156px,#ff6742 160px,#ff633a 164px,#ff5e32 168px,#ff5a28 172px,#ff561d 176px,#ff5209 180px,#ff4e00 184px)"></div><div style="left:8px;top:162px;width:187px;background:linear-gradient(90deg,#00e1ff 0px,#00e2ff 4px,#00e3ff 8px,#00e3ff 12px,#00e4ff 16px,#00e5ff 20px,#00e5ff 24px,#00e6ff 28px,#00e7ff 32px,#00e8ff 36px,#00e9ff 40px,#00eaff 44px,#00ebff 48px,#00ecff 52px,#47edff 56px,#6aeeff 60px,#85efff 64px,#9df1ff 68px,#b4f2ff 72px,#c9f4ff 76px,#def5ff 80px,#f2f7ff 84px,#fff2f7 88px,#ffe2e5 92px,#ffd4d5 96px,#ffc8c8 100px,#ffbebb 104px,#ffb4af 108px,#ffaba5 112px,#ffa39b 116px,#ff9b92 120px,#ff9489 124px,#ff8e81 128px,#ff8879 132px,#ff8271 136px,#ff7c69 140px,#ff7762 144px,#ff725b 148px,#ff6d54 152px,#ff684c 156px,#ff6445 160px,#ff603d 164px,#ff5b35 168px,#ff572d 172px,#ff5322 176px,#ff4f15 180px,#ff4b00 184px,#ff4700 188px)"></div><div style="left:9px;top:164px;width:188px;background:linear-gradient(90deg,#00deff 0px,#00dfff 4px,#00dfff 8px,#00e0ff 12px,#00e0ff 16px,#00e1ff 20px,#00e2ff 24px,#00e2ff 28px,#00e3ff 32px,#00e4ff 36px,#00e5ff 40px,#00e6ff 44px,#00e6ff 48px,#22e7ff 52px,#53e8ff 56px,#72e9ff 60px,#8cebff 64px,#a3ecff 68px,#b9edff 72px,#cdeeff 76px,#e2f0ff 80px,#f6f1ff 84px,#ffe9f4 88px,#ffdae3 92px,#ffcdd4 96px,#ffc2c6 100px,#ffb7ba 104px,#ffaeaf 108px,#ffa5a4 112px,#ff9e9a 116px,#ff9691 120px,#ff8f89 124px,#ff8981 128px,#ff8379 132px,#ff7d71 136px,#ff786a 140px,#ff7363 144px,#ff6e5c 148px,#ff6954 152px,#ff644d 156px,#ff6046 160px,#ff5b3f 164px,#ff5737 168px,#ff532f 172px,#ff4f25 176px,#ff4b19 180px,#ff4700 184px,#ff4300 188px)"></div><div style="left:9px;top:166px;width:190px;background:linear-gradient(90deg,#00dbff 0px,#00dbff 4px,#00dcff 8px,#00dcff 12px,#00ddff 16px,#00ddff 20px,#00deff 24px,#00dfff 28px,#00dfff 32px,#00e0ff 36px,#00e0ff 40px,#00e1ff 44px,#00e2ff 48px,#28e3ff 52px,#55e4ff 56px,#73e5ff 60px,#8ce5ff 64px,#a3e6ff 68px,#b8e8ff 72px,#cde9ff 76px,#e1eaff 80px,#f4ebff 84px,#ffe4f6 88px,#ffd6e4 92px,#ffc9d5 96px,#ffbec8 100px,#ffb4bc 104px,#ffaab0 108px,#ffa2a6 112px,#ff9a9c 116px,#ff9393 120px,#ff8c8b 124px,#ff8683 128px,#ff807b 132px,#ff7a73 136px,#ff756c 140px,#ff7065 144px,#ff6b5e 148px,#ff6657 152px,#ff6150 156px,#ff5d49 160px,#ff5842 164px,#ff543a 168px,#ff5032 172px,#ff4c2a 176px,#ff481f 180px,#ff4410 184px,#ff3f00 188px,#ff3b00 192px)"></div><div style="left:10px;top:168px;width:191px;background:linear-gradient(90deg,#00d8ff 0px,#00d8ff 4px,#00d8ff 8px,#00d9ff 12px,#00d9ff 16px,#00daff 20px,#00daff 24px,#00dbff 28px,#00dbff 32px,#00dcff 36px,#00dcff 40px,#00ddff 44px,#00deff 48px,#3adeff 52px,#5fdfff 56px,#7be0ff 60px,#93e1ff 64px,#a8e2ff 68px,#bde2ff 72px,#d1e3ff 76px,#e4e5ff 80px,#f8e6ff 84px,#ffdcf3 88px,#ffcee2 92px,#ffc2d4 96px,#ffb7c6 100px,#ffaebb 104px,#ffa5b0 108px,#ff9ca5 112px,#ff959c 116px,#ff8e93 120px,#ff878b 124px,#ff8183 128px,#ff7b7b 132px,#ff7674 136px,#ff706d 140px,#ff6b66 144px,#ff665f 148px,#ff6258 152px,#ff5d51 156px,#ff584a 160px,#ff5443 164px,#ff503c 168px,#ff4c34 172px,#ff472c 176px,#ff4322 180px,#ff3f15 184px,#ff3b00 188px,#ff3600 192px)"></div><div style="left:10px;top:170px;width:193px;background:linear-gradient(90deg,#00d4ff 0px,#00d5ff 4px,#00d5ff 8px,#00d5ff 12px,#00d6ff 16px,#00d6ff 20px,#00d6ff 24px,#00d7ff 28px,#00d7ff 32px,#00d8ff 36px,#00d8ff 40px,#00d9ff 44px,#00d9ff 48px,#3ddaff 52px,#60daff 56px,#7bdbff 60px,#93dcff 64px,#a8dcff 68px,#bdddff 72px,#d0deff 76px,#e3dfff 80px,#f6e0ff 84px,#ffd8f4 88px,#ffcae4 92px,#ffbed5 96px,#ffb3c8 100px,#ffaabc 104px,#ffa1b1 108px,#ff99a7 112px,#ff919e 116px,#ff8a95 120px,#ff848d 124px,#ff7e85 128px,#ff787d 132px,#ff7276 136px,#ff6d6f 140px,#ff6868 144px,#ff6361 148px,#ff5e5a 152px,#ff5a54 156px,#ff554d 160px,#ff5146 164px,#ff4c3f 168px,#ff4838 172px,#ff4430 176px,#ff3f27 180px,#ff3b1c 184px,#ff370a 188px,#ff3200 192px,#ff2e00 196px)"></div><div style="left:11px;top:172px;width:194px;background:linear-gradient(90deg,#00d1ff 0px,#00d1ff 4px,#00d2ff 8px,#00d2ff 12px,#00d2ff 16px,#00d2ff 20px,#00d3ff 24px,#00d3ff 28px,#00d3ff 32px,#00d4ff 36px,#00d4ff 40px,#00d5ff 44px,#0ad5ff 48px,#49d5ff 52px,#69d6ff 56px,#82d6ff 60px,#99d7ff 64px,#add7ff 68px,#c1d8ff 72px,#d4d9ff 76px,#e7d9ff 80px,#fadaff 84px,#ffd0f1 88px,#ffc3e2 92px,#ffb7d4 96px,#ffadc7 100px,#ffa4bb 104px,#ff9bb1 108px,#ff93a7 112px,#ff8c9e 116px,#ff8595 120px,#ff7f8d 124px,#ff7985 128px,#ff737d 132px,#ff6e76 136px,#ff686f 140px,#ff6368 144px,#ff5f62 148px,#ff5a5b 152px,#ff5554 156px,#ff514e 160px,#ff4c47 164px,#ff4840 168px,#ff4339 172px,#ff3f31 176px,#ff3b29 180px,#ff361f 184px,#ff3111 188px,#ff2d00 192px,#ff2800 196px)"></div><div style="left:11px;top:174px;width:196px;background:linear-gradient(90deg,#00ceff 0px,#00ceff 4px,#00ceff 8px,#00ceff 12px,#00cfff 16px,#00cfff 20px,#00cfff 24px,#00cfff 28px,#00d0ff 32px,#00d0ff 36px,#00d0ff 40px,#00d0ff 44px,#16d1ff 48px,#4bd1ff 52px,#6ad1ff 56px,#83d2ff 60px,#99d2ff 64px,#add2ff 68px,#c1d3ff 72px,#d4d3ff 76px,#e6d4ff 80px,#f8d4ff 84px,#ffcbf3 88px,#ffbee3 92px,#ffb3d5 96px,#ffa9c8 100px,#ffa0bd 104px,#ff98b2 108px,#ff90a9 112px,#ff899f 116px,#ff8297 120px,#ff7c8f 124px,#ff7687 128px,#ff707f 132px,#ff6a78 136px,#ff6571 140px,#ff606a 144px,#ff5b64 148px,#ff565d 152px,#ff5257 156px,#ff4d50 160px,#ff494a 164px,#ff4443 168px,#ff403c 172px,#ff3b35 176px,#ff362d 180px,#ff3224 184px,#ff2d18 188px,#ff2800 192px,#ff2200 196px)"></div><div style="left:11px;top:176px;width:198px;background:linear-gradient(90deg,#00cbff 0px,#00cbff 4px,#00cbff 8px,#00cbff 12px,#00cbff 16px,#00cbff 20px,#00cbff 24px,#00cbff 28px,#00ccff 32px,#00ccff 36px,#00ccff 40px,#00ccff 44px,#1dccff 48px,#4dccff 52px,#6bcdff 56px,#83cdff 60px,#99cdff 64px,#adcdff 68px,#c0ceff 72px,#d3ceff 76px,#e5ceff 80px,#f7cfff 84px,#ffc7f4 88px,#ffbae5 92px,#ffafd7 96px,#ffa5ca 100px,#ff9cbf 104px,#ff94b4 108px,#ff8caa 112px,#ff85a1 116px,#ff7e99 120px,#ff7890 124px,#ff7289 128px,#ff6c81 132px,#ff677a 136px,#ff6273 140px,#ff5d6c 144px,#ff5866 148px,#ff535f 152px,#ff4e59 156px,#ff4953 160px,#ff454c 164px,#ff4046 168px,#ff3b3f 172px,#ff3738 176px,#ff3231 180px,#ff2d28 184px,#ff281e 188px,#ff2211 192px,#ff1b00 196px,#ff1300 200px)"></div><div style="left:12px;top:178px;width:199px;background:linear-gradient(90deg,#00c7ff 0px,#00c7ff 4px,#00c7ff 8px,#00c7ff 12px,#00c7ff 16px,#00c8ff 20px,#00c8ff 24px,#00c8ff 28px,#00c8ff 32px,#00c8ff 36px,#00c8ff 40px,#00c8ff 44px,#31c8ff 48px,#57c8ff 52px,#72c8ff 56px,#89c8ff 60px,#9ec8ff 64px,#b2c8ff 68px,#c4c8ff 72px,#d7c9ff 76px,#e8c9ff 80px,#fac9ff 84px,#ffbff2 88px,#ffb3e3 92px,#ffa8d5 96px,#ff9fc9 100px,#ff96be 104px,#ff8eb3 108px,#ff87aa 112px,#ff80a1 116px,#ff7998 120px,#ff7390 124px,#ff6d89 128px,#ff6781 132px,#ff627a 136px,#ff5d74 140px,#ff586d 144px,#ff5366 148px,#ff4e60 152px,#ff495a 156px,#ff4453 160px,#ff404d 164px,#ff3b47 168px,#ff3640 172px,#ff3139 176px,#ff2c32 180px,#ff262a 184px,#ff2021 188px,#ff1915 192px,#ff1000 196px,#ff0000 200px)"></div><div style="left:12px;top:180px;width:199px;background:linear-gradient(90deg,#00c4ff 0px,#00c4ff 4px,#00c4ff 8px,#00c4ff 12px,#00c4ff 16px,#00c4ff 20px,#00c4ff 24px,#00c4ff 28px,#00c4ff 32px,#00c4ff 36px,#00c4ff 40px,#00c4ff 44px,#35c4ff 48px,#59c4ff 52px,#73c4ff 56px,#8ac4ff 60px,#9ec3ff 64px,#b2c3ff 68px,#c4c3ff 72px,#d6c3ff 76px,#e7c3ff 80px,#f9c3ff 84px,#ffbaf3 88px,#ffafe4 92px,#ffa4d7 96px,#ff9bca 100px,#ff92bf 104px,#ff8ab5 108px,#ff83ab 112px,#ff7ca2 116px,#ff759a 120px,#ff6f92 124px,#ff698a 128px,#ff6483 132px,#ff5e7c 136px,#ff5975 140px,#ff546f 144px,#ff4f68 148px,#ff4a62 152px,#ff455c 156px,#ff4056 160px,#ff3b50 164px,#ff3649 168px,#ff3143 172px,#ff2c3c 176px,#ff2635 180px,#ff202e 184px,#ff1925 188px,#ff0f1b 192px,#ff000b 196px,#ff0000 200px)"></div><div style="left:13px;top:182px;width:194px;background:linear-gradient(90deg,#00c1ff 0px,#00c1ff 4px,#00c1ff 8px,#00c0ff 12px,#00c0ff 16px,#00c0ff 20px,#00c0ff 24px,#00c0ff 28px,#00c0ff 32px,#00c0ff 36px,#00c0ff 40px,#00bfff 44px,#42bfff 48px,#61bfff 52px,#7abfff 56px,#8fbfff 60px,#a3bfff 64px,#b6beff 68px,#c8beff 72px,#d9beff 76px,#ebbeff 80px,#fcbdff 84px,#ffb3f1 88px,#ffa8e2 92px,#ff9ed5 96px,#ff95c9 100px,#ff8cbe 104px,#ff84b4 108px,#ff7dab 112px,#ff76a2 116px,#ff709a 120px,#ff6a92 124px,#ff648a 128px,#ff5f83 132px,#ff597c 136px,#ff5476 140px,#ff4f6f 144px,#ff4a69 148px,#ff4563 152px,#ff405d 156px,#ff3b56 160px,#ff3550 164px,#ff304a 168px,#ff2b44 172px,#ff253e 176px,#ff1e37 180px,#ff162f 184px,#ff0927 188px,#ff001e 192px,#ff0011 196px)"></div><div style="left:14px;top:184px;width:188px;background:linear-gradient(90deg,#00bdff 0px,#00bdff 4px,#00bdff 8px,#00bdff 12px,#00bdff 16px,#00bdff 20px,#00bcff 24px,#00bcff 28px,#00bcff 32px,#00bcff 36px,#00bbff 40px,#20bbff 44px,#4dbbff 48px,#69bbff 52px,#80baff 56px,#95baff 60px,#a8baff 64px,#bab9ff 68px,#ccb9ff 72px,#ddb8ff 76px,#eeb8ff 80px,#ffb7fe 84px,#ffabee 88px,#ffa1e0 92px,#ff97d3 96px,#ff8ec8 100px,#ff86bd 104px,#ff7fb3 108px,#ff78aa 112px,#ff71a1 116px,#ff6b99 120px,#ff6592 124px,#ff5f8a 128px,#ff5983 132px,#ff547d 136px,#ff4e76 140px,#ff4970 144px,#ff4469 148px,#ff3f63 152px,#ff3a5d 156px,#ff3457 160px,#ff2f51 164px,#ff294b 168px,#ff2345 172px,#ff1c3f 176px,#ff1338 180px,#ff0031 184px,#ff0029 188px)"></div><div style="left:14px;top:186px;width:184px;background:linear-gradient(90deg,#00baff 0px,#00baff 4px,#00baff 8px,#00b9ff 12px,#00b9ff 16px,#00b9ff 20px,#00b9ff 24px,#00b8ff 28px,#00b8ff 32px,#00b8ff 36px,#00b7ff 40px,#25b7ff 44px,#4eb7ff 48px,#6ab6ff 52px,#81b6ff 56px,#95b5ff 60px,#a8b5ff 64px,#bab4ff 68px,#cbb4ff 72px,#dcb3ff 76px,#edb3ff 80px,#feb2ff 84px,#ffa7f0 88px,#ff9ce2 92px,#ff93d5 96px,#ff8ac9 100px,#ff82bf 104px,#ff7bb5 108px,#ff74ac 112px,#ff6da3 116px,#ff679b 120px,#ff6193 124px,#ff5b8c 128px,#ff5585 132px,#ff507e 136px,#ff4a78 140px,#ff4571 144px,#ff406b 148px,#ff3a65 152px,#ff355f 156px,#ff2f59 160px,#ff2953 164px,#ff234d 168px,#ff1b47 172px,#ff1241 176px,#ff003b 180px,#ff0034 184px)"></div><div style="left:15px;top:188px;width:179px;background:linear-gradient(90deg,#00b7ff 0px,#00b7ff 4px,#00b6ff 8px,#00b6ff 12px,#00b6ff 16px,#00b5ff 20px,#00b5ff 24px,#00b4ff 28px,#00b4ff 32px,#00b4ff 36px,#00b3ff 40px,#35b3ff 44px,#57b2ff 48px,#71b2ff 52px,#86b1ff 56px,#9ab0ff 60px,#acb0ff 64px,#beafff 68px,#cfaeff 72px,#e0aeff 76px,#f0adff 80px,#ffabfd 84px,#ff9fed 88px,#ff95e0 92px,#ff8cd3 96px,#ff84c8 100px,#ff7cbe 104px,#ff75b4 108px,#ff6eab 112px,#ff67a3 116px,#ff619b 120px,#ff5b93 124px,#ff558c 128px,#ff4f85 132px,#ff4a7e 136px,#ff4478 140px,#ff3f72 144px,#ff396c 148px,#ff3466 152px,#ff2e60 156px,#ff285a 160px,#ff2154 164px,#ff194e 168px,#ff0d48 172px,#ff0042 176px,#ff003c 180px)"></div><div style="left:15px;top:190px;width:175px;background:linear-gradient(90deg,#00b4ff 0px,#00b3ff 4px,#00b3ff 8px,#00b2ff 12px,#00b2ff 16px,#00b2ff 20px,#00b1ff 24px,#00b1ff 28px,#00b0ff 32px,#00b0ff 36px,#00afff 40px,#38aeff 44px,#59aeff 48px,#72adff 52px,#87acff 56px,#9aacff 60px,#acabff 64px,#beaaff 68px,#cea9ff 72px,#dfa8ff 76px,#efa7ff 80px,#ffa6fe 84px,#ff9bef 88px,#ff91e1 92px,#ff88d5 96px,#ff7fca 100px,#ff78bf 104px,#ff70b6 108px,#ff69ad 112px,#ff63a4 116px,#ff5d9c 120px,#ff5795 124px,#ff518e 128px,#ff4b87 132px,#ff4580 136px,#ff407a 140px,#ff3a74 144px,#ff346e 148px,#ff2e68 152px,#ff2862 156px,#ff205c 160px,#ff1856 164px,#ff0b51 168px,#ff004b 172px,#ff0045 176px)"></div><div style="left:15px;top:192px;width:170px;background:linear-gradient(90deg,#00b0ff 0px,#00b0ff 4px,#00afff 8px,#00afff 12px,#00afff 16px,#00aeff 20px,#00adff 24px,#00adff 28px,#00acff 32px,#00acff 36px,#00abff 40px,#3baaff 44px,#5aaaff 48px,#72a9ff 52px,#87a8ff 56px,#9aa7ff 60px,#aca6ff 64px,#bda5ff 68px,#cea4ff 72px,#dea3ff 76px,#eea2ff 80px,#fea0ff 84px,#ff96f0 88px,#ff8ce2 92px,#ff83d6 96px,#ff7bcb 100px,#ff73c1 104px,#ff6cb7 108px,#ff65ae 112px,#ff5ea6 116px,#ff589e 120px,#ff5296 124px,#ff4c8f 128px,#ff4688 132px,#ff4082 136px,#ff3b7c 140px,#ff3475 144px,#ff2e6f 148px,#ff2869 152px,#ff2064 156px,#ff175e 160px,#ff0958 164px,#ff0053 168px,#ff004d 172px)"></div><div style="left:16px;top:194px;width:165px;background:linear-gradient(90deg,#00adff 0px,#00adff 4px,#00acff 8px,#00abff 12px,#00abff 16px,#00aaff 20px,#00aaff 24px,#00a9ff 28px,#00a8ff 32px,#00a7ff 36px,#15a7ff 40px,#46a6ff 44px,#62a5ff 48px,#79a4ff 52px,#8da3ff 56px,#9fa2ff 60px,#b0a1ff 64px,#c1a0ff 68px,#d19fff 72px,#e19dff 76px,#f19cff 80px,#ff99fc 84px,#ff8fee 88px,#ff85e1 92px,#ff7cd5 96px,#ff74ca 100px,#ff6dc0 104px,#ff66b6 108px,#ff5fae 112px,#ff58a5 116px,#ff529e 120px,#ff4c96 124px,#ff468f 128px,#ff4088 132px,#ff3a82 136px,#ff337c 140px,#ff2d76 144px,#ff2670 148px,#ff1e6a 152px,#ff1464 156px,#ff005f 160px,#ff0059 164px,#ff0053 168px)"></div><div style="left:16px;top:196px;width:161px;background:linear-gradient(90deg,#00aaff 0px,#00a9ff 4px,#00a9ff 8px,#00a8ff 12px,#00a7ff 16px,#00a7ff 20px,#00a6ff 24px,#00a5ff 28px,#00a4ff 32px,#00a3ff 36px,#1ba3ff 40px,#48a2ff 44px,#63a1ff 48px,#79a0ff 52px,#8d9fff 56px,#9f9dff 60px,#b09cff 64px,#c19bff 68px,#d199ff 72px,#e098ff 76px,#f096ff 80px,#ff94fe 84px,#ff8aef 88px,#ff80e2 92px,#ff78d6 96px,#ff70cb 100px,#ff68c1 104px,#ff61b8 108px,#ff5aaf 112px,#ff53a7 116px,#ff4d9f 120px,#ff4798 124px,#ff4091 128px,#ff3a8a 132px,#ff3484 136px,#ff2d7d 140px,#ff2677 144px,#ff1d71 148px,#ff136c 152px,#ff0066 156px,#ff0060 160px,#ff005b 164px)"></div><div style="left:17px;top:198px;width:155px;background:linear-gradient(90deg,#00a6ff 0px,#00a6ff 4px,#00a5ff 8px,#00a4ff 12px,#00a4ff 16px,#00a3ff 20px,#00a2ff 24px,#00a1ff 28px,#00a0ff 32px,#009fff 36px,#2e9eff 40px,#519dff 44px,#6a9cff 48px,#7f9bff 52px,#929aff 56px,#a398ff 60px,#b497ff 64px,#c495ff 68px,#d494ff 72px,#e392ff 76px,#f390ff 80px,#ff8cfb 84px,#ff82ed 88px,#ff79e0 92px,#ff71d5 96px,#ff69ca 100px,#ff61c0 104px,#ff5ab7 108px,#ff53ae 112px,#ff4da6 116px,#ff469f 120px,#ff4098 124px,#ff3991 128px,#ff328a 132px,#ff2b84 136px,#ff247d 140px,#ff1b78 144px,#ff0e72 148px,#ff006c 152px,#ff0066 156px)"></div><div style="left:17px;top:200px;width:151px;background:linear-gradient(90deg,#00a3ff 0px,#00a2ff 4px,#00a2ff 8px,#00a1ff 12px,#00a0ff 16px,#009fff 20px,#009eff 24px,#009dff 28px,#009cff 32px,#009bff 36px,#319aff 40px,#5299ff 44px,#6b98ff 48px,#7f96ff 52px,#9295ff 56px,#a393ff 60px,#b492ff 64px,#c490ff 68px,#d38eff 72px,#e38cff 76px,#f28aff 80px,#ff87fc 84px,#ff7dee 88px,#ff74e1 92px,#ff6cd6 96px,#ff64cb 100px,#ff5cc2 104px,#ff55b8 108px,#ff4eb0 112px,#ff47a8 116px,#ff41a0 120px,#ff3a99 124px,#ff3392 128px,#ff2c8c 132px,#ff2385 136px,#ff1a7f 140px,#ff0c79 144px,#ff0073 148px,#ff006e 152px)"></div><div style="left:18px;top:202px;width:146px;background:linear-gradient(90deg,#00a0ff 0px,#009fff 4px,#009eff 8px,#009dff 12px,#009cff 16px,#009bff 20px,#009aff 24px,#0099ff 28px,#0098ff 32px,#0097ff 36px,#3d96ff 40px,#5a94ff 44px,#7193ff 48px,#8591ff 52px,#9790ff 56px,#a88eff 60px,#b88cff 64px,#c78aff 68px,#d788ff 72px,#e686ff 76px,#f484ff 80px,#ff7ffa 84px,#ff75ec 88px,#ff6de0 92px,#ff64d4 96px,#ff5dca 100px,#ff55c1 104px,#ff4eb8 108px,#ff47af 112px,#ff40a7 116px,#ff39a0 120px,#ff3199 124px,#ff2a92 128px,#ff218c 132px,#ff1685 136px,#ff007f 140px,#ff0079 144px,#ff0074 148px)"></div><div style="left:19px;top:204px;width:140px;background:linear-gradient(90deg,#009cff 0px,#009bff 4px,#009aff 8px,#0099ff 12px,#0098ff 16px,#0097ff 20px,#0096ff 24px,#0095ff 28px,#0094ff 32px,#1e92ff 36px,#4791ff 40px,#618fff 44px,#778eff 48px,#8a8cff 52px,#9b8bff 56px,#ac89ff 60px,#bb87ff 64px,#cb85ff 68px,#da82ff 72px,#e880ff 76px,#f77dff 80px,#ff77f7 84px,#ff6eea 88px,#ff65de 92px,#ff5dd3 96px,#ff55c9 100px,#ff4ec0 104px,#ff46b7 108px,#ff3faf 112px,#ff38a7 116px,#ff30a0 120px,#ff2899 124px,#ff1e92 128px,#ff128b 132px,#ff0085 136px,#ff007f 140px)"></div><div style="left:20px;top:206px;width:135px;background:linear-gradient(90deg,#0098ff 0px,#0098ff 4px,#0096ff 8px,#0095ff 12px,#0094ff 16px,#0093ff 20px,#0092ff 24px,#0091ff 28px,#008fff 32px,#2f8eff 36px,#508cff 40px,#688bff 44px,#7c89ff 48px,#8f87ff 52px,#9f85ff 56px,#af83ff 60px,#bf81ff 64px,#ce7fff 68px,#dd7cff 72px,#eb79ff 76px,#fa76ff 80px,#ff6ff5 84px,#ff66e8 88px,#ff5ddd 92px,#ff55d2 96px,#ff4dc8 100px,#ff46bf 104px,#ff3eb6 108px,#ff36ae 112px,#ff2ea6 116px,#ff259f 120px,#ff1b98 124px,#ff0b92 128px,#ff008b 132px,#ff0085 136px)"></div><div style="left:20px;top:208px;width:131px;background:linear-gradient(90deg,#0095ff 0px,#0094ff 4px,#0093ff 8px,#0092ff 12px,#0091ff 16px,#008fff 20px,#008eff 24px,#008dff 28px,#008bff 32px,#328aff 36px,#5288ff 40px,#6986ff 44px,#7d84ff 48px,#8f82ff 52px,#9f80ff 56px,#af7eff 60px,#bf7cff 64px,#cd79ff 68px,#dc76ff 72px,#ea73ff 76px,#f970ff 80px,#ff69f6 84px,#ff60e9 88px,#ff57de 92px,#ff4fd3 96px,#ff47c9 100px,#ff3fc0 104px,#ff37b7 108px,#ff2eaf 112px,#ff25a8 116px,#ff1aa1 120px,#ff089a 124px,#ff0093 128px,#ff008d 132px)"></div><div style="left:21px;top:210px;width:126px;background:linear-gradient(90deg,#0091ff 0px,#0090ff 4px,#008fff 8px,#008eff 12px,#008dff 16px,#008bff 20px,#008aff 24px,#0088ff 28px,#0087ff 32px,#3e85ff 36px,#5983ff 40px,#6f81ff 44px,#827fff 48px,#937dff 52px,#a47bff 56px,#b378ff 60px,#c276ff 64px,#d073ff 68px,#df70ff 72px,#ed6cff 76px,#fb68ff 80px,#ff60f4 84px,#ff57e8 88px,#ff4fdc 92px,#ff46d2 96px,#ff3ec8 100px,#ff35bf 104px,#ff2cb7 108px,#ff22af 112px,#ff16a7 116px,#ff00a0 120px,#ff009a 124px,#ff0093 128px)"></div><div style="left:21px;top:212px;width:121px;background:linear-gradient(90deg,#008eff 0px,#008dff 4px,#008cff 8px,#008aff 12px,#0089ff 16px,#0087ff 20px,#0086ff 24px,#0084ff 28px,#0b82ff 32px,#4081ff 36px,#5a7fff 40px,#707dff 44px,#827aff 48px,#9478ff 52px,#a476ff 56px,#b373ff 60px,#c270ff 64px,#d06dff 68px,#de69ff 72px,#ec66ff 76px,#fa62ff 80px,#ff5af5 84px,#ff51e9 88px,#ff48dd 92px,#ff3fd3 96px,#ff36c9 100px,#ff2dc0 104px,#ff22b8 108px,#ff15b0 112px,#ff00a9 116px,#ff00a2 120px,#ff009b 124px)"></div><div style="left:22px;top:214px;width:116px;background:linear-gradient(90deg,#008aff 0px,#0089ff 4px,#0088ff 8px,#0086ff 12px,#0085ff 16px,#0083ff 20px,#0081ff 24px,#0080ff 28px,#257eff 32px,#497cff 36px,#617aff 40px,#7577ff 44px,#8775ff 48px,#9872ff 52px,#a770ff 56px,#b66dff 60px,#c569ff 64px,#d366ff 68px,#e162ff 72px,#ef5eff 76px,#fd59ff 80px,#ff50f3 84px,#ff47e7 88px,#ff3edc 92px,#ff34d2 96px,#ff2ac8 100px,#ff1fc0 104px,#ff0eb7 108px,#ff00b0 112px,#ff00a8 116px)"></div><div style="left:23px;top:216px;width:111px;background:linear-gradient(90deg,#0087ff 0px,#0085ff 4px,#0084ff 8px,#0082ff 12px,#0080ff 16px,#007fff 20px,#007dff 24px,#007bff 28px,#3379ff 32px,#5177ff 36px,#6774ff 40px,#7b72ff 44px,#8c6fff 48px,#9c6cff 52px,#ab69ff 56px,#ba66ff 60px,#c862ff 64px,#d65fff 68px,#e45aff 72px,#f156ff 76px,#ff50fe 80px,#ff46f1 84px,#ff3ce5 88px,#ff32db 92px,#ff28d1 96px,#ff1bc7 100px,#ff00bf 104px,#ff00b7 108px,#ff00af 112px)"></div><div style="left:24px;top:218px;width:105px;background:linear-gradient(90deg,#0083ff 0px,#0081ff 4px,#007fff 8px,#007eff 12px,#007cff 16px,#007aff 20px,#0078ff 24px,#0576ff 28px,#3e74ff 32px,#5871ff 36px,#6d6fff 40px,#7f6cff 44px,#9069ff 48px,#a066ff 52px,#af63ff 56px,#bd5fff 60px,#cb5bff 64px,#d957ff 68px,#e652ff 72px,#f44cff 76px,#ff45fc 80px,#ff3bef 84px,#ff30e4 88px,#ff24d9 92px,#ff15cf 96px,#ff00c6 100px,#ff00be 104px,#ff00b6 108px)"></div><div style="left:25px;top:220px;width:100px;background:linear-gradient(90deg,#007fff 0px,#007dff 4px,#007bff 8px,#0079ff 12px,#0078ff 16px,#0076ff 20px,#0073ff 24px,#2371ff 28px,#476fff 32px,#5f6cff 36px,#7369ff 40px,#8466ff 44px,#9463ff 48px,#a460ff 52px,#b25cff 56px,#c058ff 60px,#ce53ff 64px,#db4eff 68px,#e949ff 72px,#f642ff 76px,#ff39fa 80px,#ff2eed 84px,#ff21e2 88px,#ff0dd8 92px,#ff00ce 96px,#ff00c5 100px)"></div><div style="left:25px;top:222px;width:96px;background:linear-gradient(90deg,#007bff 0px,#0079ff 4px,#0077ff 8px,#0076ff 12px,#0073ff 16px,#0071ff 20px,#006fff 24px,#266dff 28px,#486aff 32px,#6067ff 36px,#7364ff 40px,#8561ff 44px,#955eff 48px,#a45aff 52px,#b256ff 56px,#c051ff 60px,#cd4cff 64px,#db46ff 68px,#e840ff 72px,#f538ff 76px,#ff2efb 80px,#ff20ee 84px,#ff0ae3 88px,#ff00d9 92px,#ff00d0 96px)"></div><div style="left:26px;top:224px;width:90px;background:linear-gradient(90deg,#0077ff 0px,#0075ff 4px,#0073ff 8px,#0071ff 12px,#006fff 16px,#006cff 20px,#006aff 24px,#3367ff 28px,#5064ff 32px,#6661ff 36px,#785eff 40px,#895bff 44px,#9957ff 48px,#a753ff 52px,#b54eff 56px,#c349ff 60px,#d043ff 64px,#de3cff 68px,#eb34ff 72px,#f82aff 76px,#ff1bf8 80px,#ff00ed 84px,#ff00e2 88px,#ff00d8 92px)"></div><div style="left:27px;top:226px;width:85px;background:linear-gradient(90deg,#0073ff 0px,#0071ff 4px,#006fff 8px,#006cff 12px,#006aff 16px,#0067ff 20px,#0e65ff 24px,#3e62ff 28px,#575fff 32px,#6b5bff 36px,#7d58ff 40px,#8d54ff 44px,#9c50ff 48px,#ab4bff 52px,#b945ff 56px,#c63fff 60px,#d338ff 64px,#e030ff 68px,#ed25ff 72px,#fa14ff 76px,#ff00f6 80px,#ff00eb 84px,#ff00e0 88px)"></div><div style="left:28px;top:228px;width:80px;background:linear-gradient(90deg,#006eff 0px,#006cff 4px,#006aff 8px,#0067ff 12px,#0065ff 16px,#0062ff 20px,#255fff 24px,#475cff 28px,#5e59ff 32px,#7155ff 36px,#8251ff 40px,#914cff 44px,#a048ff 48px,#ae42ff 52px,#bc3cff 56px,#c934ff 60px,#d62bff 64px,#e31fff 68px,#ef06ff 72px,#fc00ff 76px,#ff00f4 80px)"></div><div style="left:29px;top:230px;width:75px;background:linear-gradient(90deg,#006aff 0px,#0067ff 4px,#0065ff 8px,#0062ff 12px,#0060ff 16px,#005dff 20px,#3259ff 24px,#4e56ff 28px,#6452ff 32px,#764eff 36px,#864aff 40px,#9544ff 44px,#a43fff 48px,#b138ff 52px,#bf30ff 56px,#cc27ff 60px,#d919ff 64px,#e500ff 68px,#f200ff 72px,#fe00ff 76px)"></div><div style="left:30px;top:232px;width:69px;background:linear-gradient(90deg,#0065ff 0px,#0063ff 4px,#0060ff 8px,#005dff 12px,#005aff 16px,#0b57ff 20px,#3c53ff 24px,#554fff 28px,#694bff 32px,#7a47ff 36px,#8a41ff 40px,#993cff 44px,#a735ff 48px,#b52cff 52px,#c222ff 56px,#ce11ff 60px,#db00ff 64px,#e800ff 68px,#f400ff 72px)"></div><div style="left:30px;top:234px;width:65px;background:linear-gradient(90deg,#0061ff 0px,#005eff 4px,#005bff 8px,#0058ff 12px,#0055ff 16px,#1352ff 20px,#3e4eff 24px,#564aff 28px,#6a45ff 32px,#7b40ff 36px,#8b3aff 40px,#9933ff 44px,#a72bff 48px,#b420ff 52px,#c10dff 56px,#ce00ff 60px,#db00ff 64px,#e700ff 68px)"></div><div style="left:31px;top:236px;width:60px;background:linear-gradient(90deg,#005cff 0px,#0059ff 4px,#0056ff 8px,#0053ff 12px,#004fff 16px,#264bff 20px,#4647ff 24px,#5c42ff 28px,#6f3dff 32px,#7f37ff 36px,#8f2fff 40px,#9d27ff 44px,#aa1aff 48px,#b700ff 52px,#c400ff 56px,#d100ff 60px)"></div><div style="left:33px;top:238px;width:53px;background:linear-gradient(90deg,#0056ff 0px,#0053ff 4px,#004fff 8px,#004cff 12px,#0747ff 16px,#3a43ff 20px,#533eff 24px,#6738ff 28px,#7832ff 32px,#872aff 36px,#961fff 40px,#a40eff 44px,#b100ff 48px,#be00ff 52px,#ca00ff 56px)"></div><div style="left:33px;top:240px;width:49px;background:linear-gradient(90deg,#0051ff 0px,#004eff 4px,#004aff 8px,#0046ff 12px,#1141ff 16px,#3c3cff 20px,#5437ff 24px,#6830ff 28px,#7828ff 32px,#881dff 36px,#960aff 40px,#a400ff 44px,#b100ff 48px,#bd00ff 52px)"></div><div style="left:35px;top:242px;width:43px;background:linear-gradient(90deg,#004bff 0px,#0047ff 4px,#0042ff 8px,#003eff 12px,#2f38ff 16px,#4b32ff 20px,#5f2bff 24px,#7121ff 28px,#8114ff 32px,#8f00ff 36px,#9d00ff 40px,#aa00ff 44px)"></div><div style="left:36px;top:244px;width:37px;background:linear-gradient(90deg,#0044ff 0px,#0040ff 4px,#003bff 8px,#0035ff 12px,#392fff 16px,#5127ff 20px,#651dff 24px,#760bff 28px,#8500ff 32px,#9300ff 36px,#a000ff 40px)"></div><div style="left:38px;top:246px;width:31px;background:linear-gradient(90deg,#003cff 0px,#0037ff 4px,#0031ff 8px,#2a2aff 12px,#4721ff 16px,#5c14ff 20px,#6e00ff 24px,#7e00ff 28px,#8c00ff 32px)"></div><div style="left:39px;top:248px;width:26px;background:linear-gradient(90deg,#0034ff 0px,#002eff 4px,#0026ff 8px,#351cff 12px,#4e0cff 16px,#6200ff 20px,#7300ff 24px,#8200ff 28px)"></div><div style="left:41px;top:250px;width:20px;background:linear-gradient(90deg,#0029ff 0px,#0020ff 4px,#2614ff 8px,#4400ff 12px,#5a00ff 16px,#6b00ff 20px)"></div><div style="left:44px;top:252px;width:12px;background:linear-gradient(90deg,#0016ff 0px,#1e00ff 4px,#4000ff 8px,#5600ff 12px)"></div><div style="left:46px;top:254px;width:6px;background:linear-gradient(90deg,#0000ff 0px,#3400ff 4px,#4d00ff 8px)"></div></div>
<div style="left:48px;top:112px;width:251px;height:256px"><div style="background:rgba(0,0,0,0.08);left:28px;top:1px;width:1px;height:255px"></div><div style="background:rgba(0,0,0,0.08);left:56px;top:1px;width:1px;height:255px"></div><div style="background:rgba(0,0,0,0.08);left:85px;top:1px;width:1px;height:255px"></div><div style="background:rgba(0,0,0,0.08);left:113px;top:1px;width:1px;height:255px"></div><div style="background:rgba(0,0,0,0.08);left:142px;top:1px;width:1px;height:255px"></div><div style="background:rgba(0,0,0,0.08);left:170px;top:1px;width:1px;height:255px"></div><div style="background:rgba(0,0,0,0.08);left:198px;top:1px;width:1px;height:255px"></div><div style="background:rgba(0,0,0,0.08);left:227px;top:1px;width:1px;height:255px"></div><div style="background:rgba(0,0,0,0.08);left:1px;top:227px;width:250px;height:1px"></div><div style="background:rgba(0,0,0,0.08);left:1px;top:198px;width:250px;height:1px"></div><div style="background:rgba(0,0,0,0.08);left:1px;top:170px;width:250px;height:1px"></div><div style="background:rgba(0,0,0,0.08);left:1px;top:142px;width:250px;height:1px"></div><div style="background:rgba(0,0,0,0.08);left:1px;top:113px;width:250px;height:1px"></div><div style="background:rgba(0,0,0,0.08);left:1px;top:85px;width:250px;height:1px"></div><div style="background:rgba(0,0,0,0.08);left:1px;top:57px;width:250px;height:1px"></div><div style="background:rgba(0,0,0,0.08);left:1px;top:28px;width:250px;height:1px"></div></div>
<div style="left:48px;top:112px;width:1px;height:256px;background:#747474"></div>
<div style="left:48px;top:367px;width:251px;height:1px;background:#6a6a6a"></div>
<svg style="position:absolute;left:0;top:0" width="624" height="500" shape-rendering="crispEdges">
<path d="M94 342h1v1h-1zM94 343h1v1h-1zM95 338h1v1h-1zM95 339h1v1h-1zM95 340h1v1h-1zM95 341h1v1h-1zM95 342h1v1h-1zM96 335h1v1h-1zM96 336h1v1h-1zM96 337h1v1h-1zM96 342h1v1h-1zM97 331h1v1h-1zM97 332h1v1h-1zM97 333h1v1h-1zM97 334h1v1h-1zM97 341h1v1h-1zM98 328h1v1h-1zM98 329h1v1h-1zM98 330h1v1h-1zM98 341h1v1h-1zM99 324h1v1h-1zM99 325h1v1h-1zM99 326h1v1h-1zM99 327h1v1h-1zM99 340h1v1h-1zM100 321h1v1h-1zM100 322h1v1h-1zM100 323h1v1h-1zM100 340h1v1h-1zM101 317h1v1h-1zM101 318h1v1h-1zM101 319h1v1h-1zM101 320h1v1h-1zM101 339h1v1h-1zM102 313h1v1h-1zM102 314h1v1h-1zM102 315h1v1h-1zM102 316h1v1h-1zM102 339h1v1h-1zM103 310h1v1h-1zM103 311h1v1h-1zM103 312h1v1h-1zM103 338h1v1h-1zM104 306h1v1h-1zM104 307h1v1h-1zM104 308h1v1h-1zM104 309h1v1h-1zM104 338h1v1h-1zM105 303h1v1h-1zM105 304h1v1h-1zM105 305h1v1h-1zM105 337h1v1h-1zM106 299h1v1h-1zM106 300h1v1h-1zM106 301h1v1h-1zM106 302h1v1h-1zM106 336h1v1h-1zM107 296h1v1h-1zM107 297h1v1h-1zM107 298h1v1h-1zM107 336h1v1h-1zM108 292h1v1h-1zM108 293h1v1h-1zM108 294h1v1h-1zM108 295h1v1h-1zM108 335h1v1h-1zM109 289h1v1h-1zM109 290h1v1h-1zM109 291h1v1h-1zM109 335h1v1h-1zM110 285h1v1h-1zM110 286h1v1h-1zM110 287h1v1h-1zM110 288h1v1h-1zM110 334h1v1h-1zM111 282h1v1h-1zM111 283h1v1h-1zM111 284h1v1h-1zM111 334h1v1h-1zM112 278h1v1h-1zM112 279h1v1h-1zM112 280h1v1h-1zM112 281h1v1h-1zM112 333h1v1h-1zM113 275h1v1h-1zM113 276h1v1h-1zM113 277h1v1h-1zM113 333h1v1h-1zM114 271h1v1h-1zM114 272h1v1h-1zM114 273h1v1h-1zM114 274h1v1h-1zM114 332h1v1h-1zM115 267h1v1h-1zM115 268h1v1h-1zM115 269h1v1h-1zM115 270h1v1h-1zM115 332h1v1h-1zM116 264h1v1h-1zM116 265h1v1h-1zM116 266h1v1h-1zM116 331h1v1h-1zM117 260h1v1h-1zM117 261h1v1h-1zM117 262h1v1h-1zM117 263h1v1h-1zM117 331h1v1h-1zM118 257h1v1h-1zM118 258h1v1h-1zM118 259h1v1h-1zM118 330h1v1h-1zM119 253h1v1h-1zM119 254h1v1h-1zM119 255h1v1h-1zM119 256h1v1h-1zM119 329h1v1h-1zM120 250h1v1h-1zM120 251h1v1h-1zM120 252h1v1h-1zM120 329h1v1h-1zM121 246h1v1h-1zM121 247h1v1h-1zM121 248h1v1h-1zM121 249h1v1h-1zM121 328h1v1h-1zM122 243h1v1h-1zM122 244h1v1h-1zM122 245h1v1h-1zM122 328h1v1h-1zM123 239h1v1h-1zM123 240h1v1h-1zM123 241h1v1h-1zM123 242h1v1h-1zM123 327h1v1h-1zM124 236h1v1h-1zM124 237h1v1h-1zM124 238h1v1h-1zM124 327h1v1h-1zM125 232h1v1h-1zM125 233h1v1h-1zM125 234h1v1h-1zM125 235h1v1h-1zM125 326h1v1h-1zM126 229h1v1h-1zM126 230h1v1h-1zM126 231h1v1h-1zM126 326h1v1h-1zM127 225h1v1h-1zM127 226h1v1h-1zM127 227h1v1h-1zM127 228h1v1h-1zM127 325h1v1h-1zM128 221h1v1h-1zM128 222h1v1h-1zM128 223h1v1h-1zM128 224h1v1h-1zM128 325h1v1h-1zM129 218h1v1h-1zM129 219h1v1h-1zM129 220h1v1h-1zM129 324h1v1h-1zM130 214h1v1h-1zM130 215h1v1h-1zM130 216h1v1h-1zM130 217h1v1h-1zM130 323h1v1h-1zM131 211h1v1h-1zM131 212h1v1h-1zM131 213h1v1h-1zM131 323h1v1h-1zM132 207h1v1h-1zM132 208h1v1h-1zM132 209h1v1h-1zM132 210h1v1h-1zM132 322h1v1h-1zM133 204h1v1h-1zM133 205h1v1h-1zM133 206h1v1h-1zM133 322h1v1h-1zM134 200h1v1h-1zM134 201h1v1h-1zM134 202h1v1h-1zM134 203h1v1h-1zM134 321h1v1h-1zM135 198h1v1h-1zM135 199h1v1h-1zM135 321h1v1h-1zM136 199h1v1h-1zM136 320h1v1h-1zM137 200h1v1h-1zM137 320h1v1h-1zM138 200h1v1h-1zM138 319h1v1h-1zM139 201h1v1h-1zM139 319h1v1h-1zM140 202h1v1h-1zM140 318h1v1h-1zM141 203h1v1h-1zM141 318h1v1h-1zM142 204h1v1h-1zM142 317h1v1h-1zM143 205h1v1h-1zM143 316h1v1h-1zM144 205h1v1h-1zM144 316h1v1h-1zM145 206h1v1h-1zM145 315h1v1h-1zM146 207h1v1h-1zM146 315h1v1h-1zM147 208h1v1h-1zM147 314h1v1h-1zM148 209h1v1h-1zM148 314h1v1h-1zM149 210h1v1h-1zM149 313h1v1h-1zM150 210h1v1h-1zM150 313h1v1h-1zM151 211h1v1h-1zM151 312h1v1h-1zM152 212h1v1h-1zM152 312h1v1h-1zM153 213h1v1h-1zM153 311h1v1h-1zM154 214h1v1h-1zM154 310h1v1h-1zM155 214h1v1h-1zM155 310h1v1h-1zM156 215h1v1h-1zM156 309h1v1h-1zM157 216h1v1h-1zM157 309h1v1h-1zM158 217h1v1h-1zM158 308h1v1h-1zM159 218h1v1h-1zM159 308h1v1h-1zM160 219h1v1h-1zM160 307h1v1h-1zM161 219h1v1h-1zM161 307h1v1h-1zM162 220h1v1h-1zM162 306h1v1h-1zM163 221h1v1h-1zM163 306h1v1h-1zM164 222h1v1h-1zM164 305h1v1h-1zM165 223h1v1h-1zM165 305h1v1h-1zM166 223h1v1h-1zM166 304h1v1h-1zM167 224h1v1h-1zM167 303h1v1h-1zM168 225h1v1h-1zM168 303h1v1h-1zM169 226h1v1h-1zM169 302h1v1h-1zM170 227h1v1h-1zM170 302h1v1h-1zM171 228h1v1h-1zM171 301h1v1h-1zM172 228h1v1h-1zM172 301h1v1h-1zM173 229h1v1h-1zM173 300h1v1h-1zM174 230h1v1h-1zM174 300h1v1h-1zM175 231h1v1h-1zM175 299h1v1h-1zM176 232h1v1h-1zM176 299h1v1h-1zM177 233h1v1h-1zM177 298h1v1h-1zM178 233h1v1h-1zM178 297h1v1h-1zM179 234h1v1h-1zM179 297h1v1h-1zM180 235h1v1h-1zM180 296h1v1h-1zM181 236h1v1h-1zM181 296h1v1h-1zM182 237h1v1h-1zM182 295h1v1h-1zM183 237h1v1h-1zM183 295h1v1h-1zM184 238h1v1h-1zM184 294h1v1h-1zM185 239h1v1h-1zM185 294h1v1h-1zM186 240h1v1h-1zM186 293h1v1h-1zM187 241h1v1h-1zM187 293h1v1h-1zM188 242h1v1h-1zM188 292h1v1h-1zM189 242h1v1h-1zM189 292h1v1h-1zM190 243h1v1h-1zM190 291h1v1h-1zM191 244h1v1h-1zM191 290h1v1h-1zM192 245h1v1h-1zM192 290h1v1h-1zM193 246h1v1h-1zM193 289h1v1h-1zM194 247h1v1h-1zM194 289h1v1h-1zM195 247h1v1h-1zM195 288h1v1h-1zM196 248h1v1h-1zM196 288h1v1h-1zM197 249h1v1h-1zM197 287h1v1h-1zM198 250h1v1h-1zM198 287h1v1h-1zM199 251h1v1h-1zM199 286h1v1h-1zM200 251h1v1h-1zM200 286h1v1h-1zM201 252h1v1h-1zM201 285h1v1h-1zM202 253h1v1h-1zM202 284h1v1h-1zM203 254h1v1h-1zM203 284h1v1h-1zM204 255h1v1h-1zM204 283h1v1h-1zM205 256h1v1h-1zM205 283h1v1h-1zM206 256h1v1h-1zM206 282h1v1h-1zM207 257h1v1h-1zM207 282h1v1h-1zM208 258h1v1h-1zM208 281h1v1h-1zM209 259h1v1h-1zM209 281h1v1h-1zM210 260h1v1h-1zM210 280h1v1h-1zM211 260h1v1h-1zM211 280h1v1h-1zM212 261h1v1h-1zM212 279h1v1h-1zM213 262h1v1h-1zM213 279h1v1h-1zM214 263h1v1h-1zM214 278h1v1h-1zM215 264h1v1h-1zM215 277h1v1h-1zM216 265h1v1h-1zM216 277h1v1h-1zM217 265h1v1h-1zM217 276h1v1h-1zM218 266h1v1h-1zM218 276h1v1h-1zM219 267h1v1h-1zM219 275h1v1h-1zM220 268h1v1h-1zM220 275h1v1h-1zM221 269h1v1h-1zM221 274h1v1h-1zM222 270h1v1h-1zM222 274h1v1h-1zM223 270h1v1h-1zM223 273h1v1h-1zM224 271h1v1h-1zM224 273h1v1h-1zM225 272h1v1h-1z" fill="#f2b048"/>
<path d="M88 347h1v1h-1zM88 348h1v1h-1zM89 343h1v1h-1zM89 344h1v1h-1zM89 345h1v1h-1zM89 346h1v1h-1zM89 348h1v1h-1zM90 340h1v1h-1zM90 341h1v1h-1zM90 342h1v1h-1zM90 347h1v1h-1zM91 337h1v1h-1zM91 338h1v1h-1zM91 339h1v1h-1zM91 347h1v1h-1zM92 333h1v1h-1zM92 334h1v1h-1zM92 335h1v1h-1zM92 336h1v1h-1zM92 347h1v1h-1zM93 330h1v1h-1zM93 331h1v1h-1zM93 332h1v1h-1zM93 346h1v1h-1zM94 327h1v1h-1zM94 328h1v1h-1zM94 329h1v1h-1zM94 346h1v1h-1zM95 323h1v1h-1zM95 324h1v1h-1zM95 325h1v1h-1zM95 326h1v1h-1zM95 346h1v1h-1zM96 320h1v1h-1zM96 321h1v1h-1zM96 322h1v1h-1zM96 345h1v1h-1zM97 317h1v1h-1zM97 318h1v1h-1zM97 319h1v1h-1zM97 345h1v1h-1zM98 313h1v1h-1zM98 314h1v1h-1zM98 315h1v1h-1zM98 316h1v1h-1zM98 345h1v1h-1zM99 310h1v1h-1zM99 311h1v1h-1zM99 312h1v1h-1zM99 344h1v1h-1zM100 307h1v1h-1zM100 308h1v1h-1zM100 309h1v1h-1zM100 344h1v1h-1zM101 303h1v1h-1zM101 304h1v1h-1zM101 305h1v1h-1zM101 306h1v1h-1zM101 344h1v1h-1zM102 300h1v1h-1zM102 301h1v1h-1zM102 302h1v1h-1zM102 343h1v1h-1zM103 297h1v1h-1zM103 298h1v1h-1zM103 299h1v1h-1zM103 343h1v1h-1zM104 293h1v1h-1zM104 294h1v1h-1zM104 295h1v1h-1zM104 296h1v1h-1zM104 342h1v1h-1zM105 290h1v1h-1zM105 291h1v1h-1zM105 292h1v1h-1zM105 342h1v1h-1zM106 286h1v1h-1zM106 287h1v1h-1zM106 288h1v1h-1zM106 289h1v1h-1zM106 342h1v1h-1zM107 283h1v1h-1zM107 284h1v1h-1zM107 285h1v1h-1zM107 341h1v1h-1zM108 280h1v1h-1zM108 281h1v1h-1zM108 282h1v1h-1zM108 341h1v1h-1zM109 276h1v1h-1zM109 277h1v1h-1zM109 278h1v1h-1zM109 279h1v1h-1zM109 341h1v1h-1zM110 273h1v1h-1zM110 274h1v1h-1zM110 275h1v1h-1zM110 340h1v1h-1zM111 270h1v1h-1zM111 271h1v1h-1zM111 272h1v1h-1zM111 340h1v1h-1zM112 266h1v1h-1zM112 267h1v1h-1zM112 268h1v1h-1zM112 269h1v1h-1zM112 340h1v1h-1zM113 263h1v1h-1zM113 264h1v1h-1zM113 265h1v1h-1zM113 339h1v1h-1zM114 260h1v1h-1zM114 261h1v1h-1zM114 262h1v1h-1zM114 339h1v1h-1zM115 256h1v1h-1zM115 257h1v1h-1zM115 258h1v1h-1zM115 259h1v1h-1zM115 339h1v1h-1zM116 253h1v1h-1zM116 254h1v1h-1zM116 255h1v1h-1zM116 338h1v1h-1zM117 250h1v1h-1zM117 251h1v1h-1zM117 252h1v1h-1zM117 338h1v1h-1zM118 246h1v1h-1zM118 247h1v1h-1zM118 248h1v1h-1zM118 249h1v1h-1zM118 338h1v1h-1zM119 243h1v1h-1zM119 244h1v1h-1zM119 245h1v1h-1zM119 337h1v1h-1zM120 239h1v1h-1zM120 240h1v1h-1zM120 241h1v1h-1zM120 242h1v1h-1zM120 337h1v1h-1zM121 236h1v1h-1zM121 237h1v1h-1zM121 238h1v1h-1zM121 337h1v1h-1zM122 233h1v1h-1zM122 234h1v1h-1zM122 235h1v1h-1zM122 336h1v1h-1zM123 229h1v1h-1zM123 230h1v1h-1zM123 231h1v1h-1zM123 232h1v1h-1zM123 336h1v1h-1zM124 226h1v1h-1zM124 227h1v1h-1zM124 228h1v1h-1zM124 336h1v1h-1zM125 223h1v1h-1zM125 224h1v1h-1zM125 225h1v1h-1zM125 335h1v1h-1zM126 219h1v1h-1zM126 220h1v1h-1zM126 221h1v1h-1zM126 222h1v1h-1zM126 335h1v1h-1zM127 216h1v1h-1zM127 217h1v1h-1zM127 218h1v1h-1zM127 335h1v1h-1zM128 213h1v1h-1zM128 214h1v1h-1zM128 215h1v1h-1zM128 334h1v1h-1zM129 209h1v1h-1zM129 210h1v1h-1zM129 211h1v1h-1zM129 212h1v1h-1zM129 334h1v1h-1zM130 206h1v1h-1zM130 207h1v1h-1zM130 208h1v1h-1zM130 333h1v1h-1zM131 203h1v1h-1zM131 204h1v1h-1zM131 205h1v1h-1zM131 333h1v1h-1zM132 199h1v1h-1zM132 200h1v1h-1zM132 201h1v1h-1zM132 202h1v1h-1zM132 333h1v1h-1zM133 196h1v1h-1zM133 197h1v1h-1zM133 198h1v1h-1zM133 332h1v1h-1zM134 193h1v1h-1zM134 194h1v1h-1zM134 195h1v1h-1zM134 332h1v1h-1zM135 189h1v1h-1zM135 190h1v1h-1zM135 191h1v1h-1zM135 192h1v1h-1zM135 332h1v1h-1zM136 187h1v1h-1zM136 188h1v1h-1zM136 331h1v1h-1zM137 188h1v1h-1zM137 331h1v1h-1zM138 189h1v1h-1zM138 331h1v1h-1zM139 190h1v1h-1zM139 330h1v1h-1zM140 191h1v1h-1zM140 330h1v1h-1zM141 192h1v1h-1zM141 330h1v1h-1zM142 193h1v1h-1zM142 329h1v1h-1zM143 193h1v1h-1zM143 329h1v1h-1zM144 194h1v1h-1zM144 329h1v1h-1zM145 195h1v1h-1zM145 328h1v1h-1zM146 196h1v1h-1zM146 328h1v1h-1zM147 197h1v1h-1zM147 328h1v1h-1zM148 198h1v1h-1zM148 327h1v1h-1zM149 199h1v1h-1zM149 327h1v1h-1zM150 200h1v1h-1zM150 327h1v1h-1zM151 201h1v1h-1zM151 326h1v1h-1zM152 202h1v1h-1zM152 326h1v1h-1zM153 203h1v1h-1zM153 326h1v1h-1zM154 204h1v1h-1zM154 325h1v1h-1zM155 205h1v1h-1zM155 325h1v1h-1zM156 205h1v1h-1zM156 324h1v1h-1zM157 206h1v1h-1zM157 324h1v1h-1zM158 207h1v1h-1zM158 324h1v1h-1zM159 208h1v1h-1zM159 323h1v1h-1zM160 209h1v1h-1zM160 323h1v1h-1zM161 210h1v1h-1zM161 323h1v1h-1zM162 211h1v1h-1zM162 322h1v1h-1zM163 212h1v1h-1zM163 322h1v1h-1zM164 213h1v1h-1zM164 322h1v1h-1zM165 214h1v1h-1zM165 321h1v1h-1zM166 215h1v1h-1zM166 321h1v1h-1zM167 216h1v1h-1zM167 321h1v1h-1zM168 216h1v1h-1zM168 320h1v1h-1zM169 217h1v1h-1zM169 320h1v1h-1zM170 218h1v1h-1zM170 320h1v1h-1zM171 219h1v1h-1zM171 319h1v1h-1zM172 220h1v1h-1zM172 319h1v1h-1zM173 221h1v1h-1zM173 319h1v1h-1zM174 222h1v1h-1zM174 318h1v1h-1zM175 223h1v1h-1zM175 318h1v1h-1zM176 224h1v1h-1zM176 318h1v1h-1zM177 225h1v1h-1zM177 317h1v1h-1zM178 226h1v1h-1zM178 317h1v1h-1zM179 227h1v1h-1zM179 317h1v1h-1zM180 228h1v1h-1zM180 316h1v1h-1zM181 228h1v1h-1zM181 316h1v1h-1zM182 229h1v1h-1zM182 316h1v1h-1zM183 230h1v1h-1zM183 315h1v1h-1zM184 231h1v1h-1zM184 315h1v1h-1zM185 232h1v1h-1zM185 314h1v1h-1zM186 233h1v1h-1zM186 314h1v1h-1zM187 234h1v1h-1zM187 314h1v1h-1zM188 235h1v1h-1zM188 313h1v1h-1zM189 236h1v1h-1zM189 313h1v1h-1zM190 237h1v1h-1zM190 313h1v1h-1zM191 238h1v1h-1zM191 312h1v1h-1zM192 239h1v1h-1zM192 312h1v1h-1zM193 240h1v1h-1zM193 312h1v1h-1zM194 240h1v1h-1zM194 311h1v1h-1zM195 241h1v1h-1zM195 311h1v1h-1zM196 242h1v1h-1zM196 311h1v1h-1zM197 243h1v1h-1zM197 310h1v1h-1zM198 244h1v1h-1zM198 310h1v1h-1zM199 245h1v1h-1zM199 310h1v1h-1zM200 246h1v1h-1zM200 309h1v1h-1zM201 247h1v1h-1zM201 309h1v1h-1zM202 248h1v1h-1zM202 309h1v1h-1zM203 249h1v1h-1zM203 308h1v1h-1zM204 250h1v1h-1zM204 308h1v1h-1zM205 251h1v1h-1zM205 308h1v1h-1zM206 251h1v1h-1zM206 307h1v1h-1zM207 252h1v1h-1zM207 307h1v1h-1zM208 253h1v1h-1zM208 307h1v1h-1zM209 254h1v1h-1zM209 306h1v1h-1zM210 255h1v1h-1zM210 306h1v1h-1zM211 256h1v1h-1zM211 305h1v1h-1zM212 257h1v1h-1zM212 305h1v1h-1zM213 258h1v1h-1zM213 305h1v1h-1zM214 259h1v1h-1zM214 304h1v1h-1zM215 260h1v1h-1zM215 304h1v1h-1zM216 261h1v1h-1zM216 304h1v1h-1zM217 262h1v1h-1zM217 303h1v1h-1zM218 263h1v1h-1zM218 303h1v1h-1zM219 263h1v1h-1zM219 303h1v1h-1zM220 264h1v1h-1zM220 302h1v1h-1zM221 265h1v1h-1zM221 302h1v1h-1zM222 266h1v1h-1zM222 302h1v1h-1zM223 267h1v1h-1zM223 301h1v1h-1zM224 268h1v1h-1zM224 301h1v1h-1zM225 269h1v1h-1zM225 301h1v1h-1zM226 270h1v1h-1zM226 300h1v1h-1zM227 271h1v1h-1zM227 300h1v1h-1zM228 272h1v1h-1zM228 300h1v1h-1zM229 273h1v1h-1zM229 299h1v1h-1zM230 274h1v1h-1zM230 299h1v1h-1zM231 275h1v1h-1zM231 299h1v1h-1zM232 275h1v1h-1zM232 298h1v1h-1zM233 276h1v1h-1zM233 298h1v1h-1zM234 277h1v1h-1zM234 298h1v1h-1zM235 278h1v1h-1zM235 297h1v1h-1zM236 279h1v1h-1zM236 297h1v1h-1zM237 280h1v1h-1zM237 296h1v1h-1zM238 281h1v1h-1zM238 296h1v1h-1zM239 282h1v1h-1zM239 296h1v1h-1zM240 283h1v1h-1zM240 295h1v1h-1zM241 284h1v1h-1zM241 295h1v1h-1zM242 285h1v1h-1zM242 295h1v1h-1zM243 286h1v1h-1zM243 294h1v1h-1zM244 286h1v1h-1zM244 294h1v1h-1zM245 287h1v1h-1zM245 294h1v1h-1zM246 288h1v1h-1zM246 293h1v1h-1zM247 289h1v1h-1zM247 293h1v1h-1zM248 290h1v1h-1zM248 293h1v1h-1zM249 291h1v1h-1zM249 292h1v1h-1zM250 292h1v1h-1z" fill="#000"/>
</svg>
<div class="t" style="left:51px;top:113px;font-size:9px;line-height:9px;color:#333">y</div>
<div class="t lb" style="left:51px;top:135.5px">0.8</div>
<div class="t lb" style="left:51px;top:192.5px">0.6</div>
<div class="t lb" style="left:51px;top:249.5px">0.4</div>
<div class="t lb" style="left:51px;top:306px">0.2</div>
<div class="t lb" style="left:51px;top:357.5px">0</div>
<div class="t lb" style="left:99.4px;top:357.5px">0.2</div>
<div class="t lb" style="left:156.2px;top:357.5px">0.4</div>
<div class="t lb" style="left:213px;top:357.5px">0.6</div>
<div class="t lb" style="left:269.8px;top:357.5px">0.8</div>
<div style="left:294px;top:357px;width:5px;height:10px;overflow:hidden"><div class="t" style="left:2px;top:0.5px;font-size:9px;line-height:9px;color:#222">x</div></div>
<!-- bar chart -->
<div style="left:322px;top:112px;width:256px;height:256px;border:1px solid #111;background:linear-gradient(180deg,#e04515 0%,#eca020 20%,#ecd020 30%,#e4e818 40%,#d2e216 50%,#a4ca16 60%,#68a818 80%,#368a0e 100%);overflow:hidden">
<div style="left:0;top:203px;width:254px;height:1px;background:rgba(0,0,0,0.12)"></div><div style="left:0;top:152px;width:254px;height:1px;background:rgba(0,0,0,0.12)"></div><div style="left:0;top:101px;width:254px;height:1px;background:rgba(0,0,0,0.12)"></div><div style="left:0;top:50px;width:254px;height:1px;background:rgba(0,0,0,0.12)"></div>
<div class="t dl" style="top:1px;line-height:8px">10 d E 94</div>
<div class="t dl" style="top:46px;line-height:8px">8 d E 94</div>
<div class="t dl" style="top:97px;line-height:8px">6 d E 94</div>
<div class="t dl" style="top:148px;line-height:8px">4 d E 94</div>
<div class="t dl" style="top:199px;line-height:8px">2 d E 94</div>
<div class="bar" style="left:44px;top:17px;height:238px;background:#333333"></div><div class="bar" style="left:56px;top:28px;height:227px;background:#444444"></div><div class="bar" style="left:68px;top:171px;height:84px;background:#888888"></div><div class="bar" style="left:80px;top:222px;height:33px;background:#c8c8c8"></div><div class="bar" style="left:104px;top:122px;height:133px;background:#ff0000"></div><div class="bar" style="left:116px;top:135px;height:120px;background:#00f000"></div><div class="bar" style="left:128px;top:74px;height:181px;background:#0000ff"></div><div class="bar" style="left:140px;top:107px;height:148px;background:#00ffff"></div><div class="bar" style="left:152px;top:184px;height:71px;background:#ff00ff"></div><div class="bar" style="left:164px;top:133px;height:122px;background:#ffff00"></div><div class="bar" style="left:176px;top:130px;height:125px;background:#b05050"></div><div class="bar" style="left:188px;top:191px;height:64px;background:#50a860"></div><div class="bar" style="left:200px;top:53px;height:202px;background:#5050a8"></div><div class="bar" style="left:212px;top:163px;height:92px;background:#50b0b0"></div><div class="bar" style="left:224px;top:140px;height:115px;background:#b050b0"></div><div class="bar" style="left:236px;top:207px;height:48px;background:#b0b060"></div>
</div>
<!-- buttons -->
<div class="btn" style="left:19px;border:2px solid #0a70cc"></div>
<div style="left:21px;top:467px;width:69px;height:17px;border:1px dotted #000"></div>
<div class="btn" style="left:104px"></div>
<div class="btn" style="left:447px"></div>
<div class="btn" style="left:532px"></div>
<div class="t" style="left:25.8px;top:6.84px;font-size:12px;line-height:12px;font-weight:400;color:#000;transform:scaleX(0.969);">blue eye pro</div>
<div class="t" style="left:9px;top:30.34px;font-size:12px;line-height:12px;font-weight:400;color:#000;transform:scaleX(0.928);">Tools</div>
<div class="t" style="left:49.8px;top:29.84px;font-size:12px;line-height:12px;font-weight:400;color:#000;transform:scaleX(0.927);">Device</div>
<div class="t" style="left:98.5px;top:29.84px;font-size:12px;line-height:12px;font-weight:400;color:#000;transform:scaleX(0.948);">Help</div>
<div class="t" style="left:396.6px;top:71.58px;font-size:22px;line-height:22px;font-weight:700;color:#000;transform:scaleX(1.089);">Calibration Report</div>
<div class="t" style="left:96.8px;top:96.29px;font-size:11px;line-height:11px;font-weight:400;color:#000;transform:scaleX(0.818);">sRGB</div>
<div class="t" style="left:151px;top:96.29px;font-size:11px;line-height:11px;font-weight:400;color:#000;transform:scaleX(0.896);">Adobe RGB</div>
<div class="t" style="left:234px;top:96.29px;font-size:11px;line-height:11px;font-weight:400;color:#000;transform:scaleX(0.962);">ISOcoated</div>
<div class="t" style="left:215.5px;top:161.80px;font-size:13px;line-height:13px;font-weight:700;color:#000;transform:scaleX(1.014);">Monitor</div>
<div class="t" style="left:215.5px;top:178.30px;font-size:13px;line-height:13px;font-weight:700;color:#f2a52a;transform:scaleX(1.024);">sRGB</div>
<div class="t" style="left:110.5px;top:380.34px;font-size:12px;line-height:12px;font-weight:400;color:#000;">Target</div>
<div class="t" style="left:174.4px;top:380.34px;font-size:12px;line-height:12px;font-weight:400;color:#000;">Current</div>
<div class="t" style="left:238.3px;top:380.34px;font-size:12px;line-height:12px;font-weight:400;color:#000;">Deviation</div>
<div class="t" style="left:46.6px;top:395.14px;font-size:12px;line-height:12px;font-weight:400;color:#000;transform:scaleX(1.031);">Gamma</div>
<div class="t" style="left:110.5px;top:395.14px;font-size:12px;line-height:12px;font-weight:400;color:#000;">1.8</div>
<div class="t" style="left:174.4px;top:395.14px;font-size:12px;line-height:12px;font-weight:400;color:#ec8a34;">2.1</div>
<div class="t" style="left:238.3px;top:395.14px;font-size:12px;line-height:12px;font-weight:400;color:#ec8a34;">15%</div>
<div class="t" style="left:46.6px;top:409.84px;font-size:12px;line-height:12px;font-weight:400;color:#000;">Kelvin</div>
<div class="t" style="left:110.5px;top:409.84px;font-size:12px;line-height:12px;font-weight:400;color:#000;">5500</div>
<div class="t" style="left:174.4px;top:409.84px;font-size:12px;line-height:12px;font-weight:400;color:#ec8a34;">4432</div>
<div class="t" style="left:238.3px;top:409.84px;font-size:12px;line-height:12px;font-weight:400;color:#ec8a34;">19%</div>
<div class="t" style="left:46.6px;top:424.54px;font-size:12px;line-height:12px;font-weight:400;color:#000;">cd/m2</div>
<div class="t" style="left:110.5px;top:424.54px;font-size:12px;line-height:12px;font-weight:400;color:#000;">120</div>
<div class="t" style="left:174.4px;top:424.54px;font-size:12px;line-height:12px;font-weight:400;color:#ec8a34;">226</div>
<div class="t" style="left:238.3px;top:424.54px;font-size:12px;line-height:12px;font-weight:400;color:#ec8a34;">88%</div>
<div class="t" style="left:322.2px;top:379.84px;font-size:12px;line-height:12px;font-weight:400;color:#000;transform:scaleX(0.982);">Delta E Average</div>
<div class="t" style="left:435.2px;top:379.84px;font-size:12px;line-height:12px;font-weight:400;color:#ec8a34;">4.4</div>
<div class="t" style="left:322.2px;top:394.74px;font-size:12px;line-height:12px;font-weight:400;color:#000;">Delta E Maximum</div>
<div class="t" style="left:435.2px;top:394.74px;font-size:12px;line-height:12px;font-weight:400;color:#ec8a34;">9.3</div>
<div class="t" style="left:29.6px;top:470.47px;font-size:11.5px;line-height:11.5px;font-weight:400;color:#000;transform:scaleX(0.879);">Main Menu</div>
<div class="t" style="left:114.7px;top:470.47px;font-size:11.5px;line-height:11.5px;font-weight:400;color:#000;transform:scaleX(0.928);">Calibration</div>
<div class="t" style="left:470.3px;top:470.47px;font-size:11.5px;line-height:11.5px;font-weight:400;color:#000;transform:scaleX(0.915);">Save</div>
<div class="t" style="left:556.8px;top:470.47px;font-size:11.5px;line-height:11.5px;font-weight:400;color:#000;">Quit</div>
</body></html>
